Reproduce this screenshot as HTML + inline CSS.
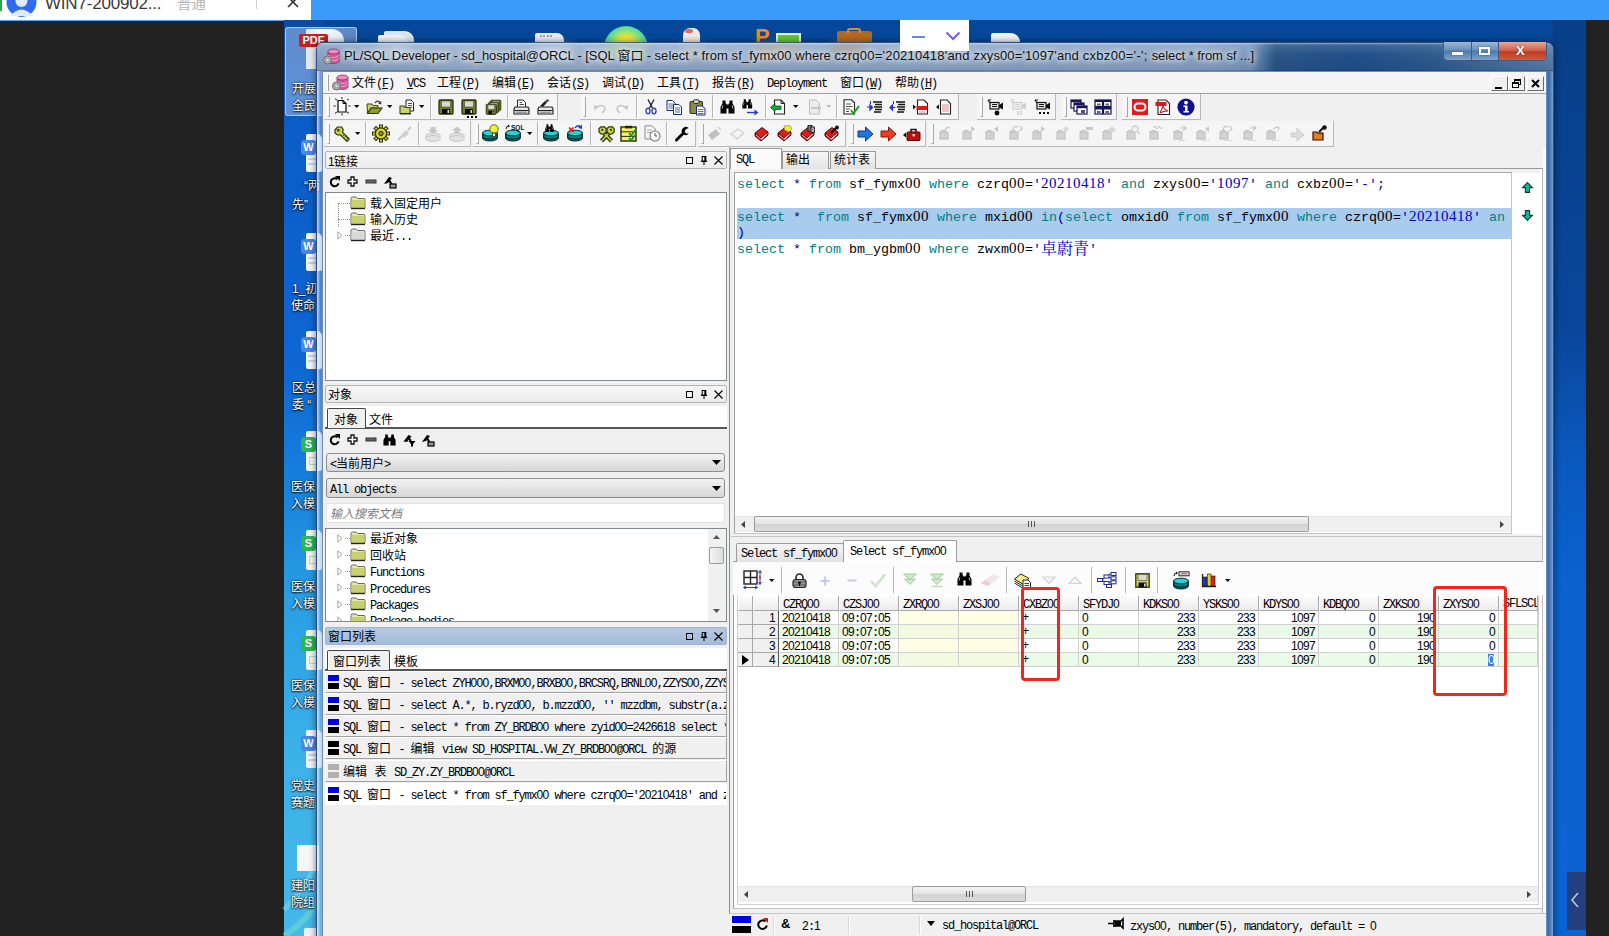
<!DOCTYPE html>
<html lang="zh"><head><meta charset="utf-8"><title>PL/SQL Developer</title>
<style>
html,body{margin:0;padding:0;background:#222;overflow:hidden}
body{width:1609px;height:936px;position:relative;font:12px "Liberation Mono","Noto Serif CJK SC",monospace;color:#000}
div{position:absolute;box-sizing:border-box;white-space:nowrap}
svg{position:absolute;overflow:visible}
u{text-decoration-skip-ink:none;text-underline-offset:1px}
i.c{font-style:normal;letter-spacing:0}
i.d{font-style:normal;letter-spacing:-.67px;font-family:"Liberation Sans",sans-serif}
.e i.d{font-family:"Liberation Serif",serif;font-size:15px;letter-spacing:.5px;line-height:14px}
.e i.c{position:relative;top:1px}
.u{font:12px/14px "Liberation Mono","Noto Sans CJK SC",monospace;letter-spacing:-1.2px;color:#000}
.e{font:13.33px/16px "Liberation Mono","Noto Serif CJK SC",monospace;color:#000}
.e i.c{font-size:16px;line-height:14px}
.k{color:#008080}.s{color:#0000c8}.n{color:#000080}
.wl i.c{margin-right:1.5px}
.t{font:12px/14px "Liberation Sans","Noto Sans CJK SC",sans-serif;color:#000}
</style></head>
<body>
<div style="left:0px;top:0px;width:1609px;height:20px;background:#3a9bfb"></div>
<div style="left:0px;top:0px;width:311px;height:21px;background:#fff;border-bottom:1.5px solid #4aa3fb"></div>
<svg style="left:6px;top:-15px" width="31" height="34" viewBox="0 0 31 34"><circle cx="15.5" cy="17" r="15" fill="#2f6bf0"/><circle cx="15.5" cy="16" r="6" fill="#dfe9ff"/><path d="M4 31 Q15.5 18 27 31 Z" fill="#dfe9ff"/></svg>
<div style="left:0px;top:0px;width:2px;height:11px;background:#2aa84a"></div>
<div style="left:45px;top:-7px;font:17px/22px 'Liberation Sans',sans-serif;color:#3a3a3a;letter-spacing:-0.2px">WIN7-200902...</div>
<div style="left:177px;top:-7px;font:14.5px/22px 'Liberation Sans','Noto Sans CJK SC',sans-serif;color:#b4b4b4">普通</div>
<div style="left:256px;top:0px;width:1px;height:9px;background:#ccc"></div>
<svg style="left:287px;top:-4px" width="12" height="12" viewBox="0 0 12 12"><path d="M1 1 L11 11 M11 1 L1 11" stroke="#333" stroke-width="1.6" fill="none"/></svg>
<div style="left:284px;top:20px;width:1302px;height:916px;background:#05489a"></div>
<div style="left:284px;top:20px;width:40px;height:916px;background:linear-gradient(180deg,#0a4ca4 0,#0b5cc6 100px,#0d66d2 340px,#1680dc 460px,#2a9ee4 580px,#3cb2e8 740px,#46b8ea 916px)"></div>
<svg style="left:284px;top:850px" width="34" height="86" viewBox="0 0 34 86"><path d="M0 60 Q20 40 34 10" stroke="#8fe0f0" stroke-width="5" fill="none" opacity=".45"/><path d="M0 86 Q24 70 34 50" stroke="#7fe8c8" stroke-width="6" fill="none" opacity=".4"/></svg>
<div style="left:1553px;top:20px;width:33px;height:916px;background:linear-gradient(180deg,#083f88 0%,#09469a 33%,#0a58bc 47%,#0b62d0 62%,#0b64d4 100%)"></div>
<div style="left:1566.5px;top:872px;width:19.5px;height:58px;background:#233f80"></div>
<svg style="left:1569px;top:890px" width="12" height="20" viewBox="0 0 12 20"><path d="M9 3 L3 10 L9 17" stroke="#b9c6e0" stroke-width="1.6" fill="none"/></svg>
<div style="left:285px;top:27px;width:72px;height:89px;background:rgba(150,182,232,.6);border:1px solid rgba(190,215,248,.8);border-radius:3px"></div>
<div style="left:306px;top:29px;width:38px;height:40px;background:linear-gradient(90deg,#dfe7f5,#f4f7fc 40%,#e8eef8);border-radius:1px 12px 0 0"></div>
<div style="left:299px;top:34px;width:29px;height:13px;background:#c81e1e;border-radius:2px;color:#fff;font:bold 11px/13px 'Liberation Sans',sans-serif;text-align:center">PDF</div>
<div style="left:292px;top:81px;font:12px/16px 'Liberation Sans','Noto Sans CJK SC',sans-serif;color:#fff;text-shadow:0 1px 2px #000,0 0 2px #000">开展</div>
<div style="left:292px;top:98px;font:12px/16px 'Liberation Sans','Noto Sans CJK SC',sans-serif;color:#fff;text-shadow:0 1px 2px #000,0 0 2px #000">全民</div>
<div style="left:304px;top:178px;font:12px/16px 'Liberation Sans','Noto Sans CJK SC',sans-serif;color:#fff;text-shadow:0 1px 2px #000,0 0 2px #000">“两</div>
<div style="left:292px;top:197px;font:12px/16px 'Liberation Sans','Noto Sans CJK SC',sans-serif;color:#fff;text-shadow:0 1px 2px #000,0 0 2px #000">先”</div>
<div style="left:292px;top:281px;font:12px/16px 'Liberation Sans','Noto Sans CJK SC',sans-serif;color:#fff;text-shadow:0 1px 2px #000,0 0 2px #000">1_初</div>
<div style="left:291px;top:298px;font:12px/16px 'Liberation Sans','Noto Sans CJK SC',sans-serif;color:#fff;text-shadow:0 1px 2px #000,0 0 2px #000">使命</div>
<div style="left:292px;top:380px;font:12px/16px 'Liberation Sans','Noto Sans CJK SC',sans-serif;color:#fff;text-shadow:0 1px 2px #000,0 0 2px #000">区总</div>
<div style="left:292px;top:397px;font:12px/16px 'Liberation Sans','Noto Sans CJK SC',sans-serif;color:#fff;text-shadow:0 1px 2px #000,0 0 2px #000">委 “</div>
<div style="left:291px;top:479px;font:12px/16px 'Liberation Sans','Noto Sans CJK SC',sans-serif;color:#fff;text-shadow:0 1px 2px #000,0 0 2px #000">医保</div>
<div style="left:291px;top:496px;font:12px/16px 'Liberation Sans','Noto Sans CJK SC',sans-serif;color:#fff;text-shadow:0 1px 2px #000,0 0 2px #000">入模</div>
<div style="left:291px;top:579px;font:12px/16px 'Liberation Sans','Noto Sans CJK SC',sans-serif;color:#fff;text-shadow:0 1px 2px #000,0 0 2px #000">医保</div>
<div style="left:291px;top:596px;font:12px/16px 'Liberation Sans','Noto Sans CJK SC',sans-serif;color:#fff;text-shadow:0 1px 2px #000,0 0 2px #000">入模</div>
<div style="left:291px;top:678px;font:12px/16px 'Liberation Sans','Noto Sans CJK SC',sans-serif;color:#fff;text-shadow:0 1px 2px #000,0 0 2px #000">医保</div>
<div style="left:291px;top:695px;font:12px/16px 'Liberation Sans','Noto Sans CJK SC',sans-serif;color:#fff;text-shadow:0 1px 2px #000,0 0 2px #000">入模</div>
<div style="left:291px;top:778px;font:12px/16px 'Liberation Sans','Noto Sans CJK SC',sans-serif;color:#fff;text-shadow:0 1px 2px #000,0 0 2px #000">党史</div>
<div style="left:291px;top:795px;font:12px/16px 'Liberation Sans','Noto Sans CJK SC',sans-serif;color:#fff;text-shadow:0 1px 2px #000,0 0 2px #000">赛题</div>
<div style="left:291px;top:878px;font:12px/16px 'Liberation Sans','Noto Sans CJK SC',sans-serif;color:#fff;text-shadow:0 1px 2px #000,0 0 2px #000">建阳</div>
<div style="left:291px;top:895px;font:12px/16px 'Liberation Sans','Noto Sans CJK SC',sans-serif;color:#fff;text-shadow:0 1px 2px #000,0 0 2px #000">院组</div>
<div style="left:306px;top:134px;width:16px;height:38px;background:#f3f6fc;border-radius:2px 5px 2px 2px"></div>
<div style="left:308px;top:158px;width:10px;height:2px;background:#c9d4ea"></div>
<div style="left:308px;top:163px;width:10px;height:2px;background:#c9d4ea"></div>
<div style="left:301px;top:140px;width:15px;height:15px;background:#4a86e8;border-radius:3px;color:#fff;font:bold 11px/14px 'Liberation Sans',sans-serif;text-align:center">W</div>
<div style="left:306px;top:233px;width:16px;height:38px;background:#f3f6fc;border-radius:2px 5px 2px 2px"></div>
<div style="left:308px;top:257px;width:10px;height:2px;background:#c9d4ea"></div>
<div style="left:308px;top:262px;width:10px;height:2px;background:#c9d4ea"></div>
<div style="left:301px;top:239px;width:15px;height:15px;background:#4a86e8;border-radius:3px;color:#fff;font:bold 11px/14px 'Liberation Sans',sans-serif;text-align:center">W</div>
<div style="left:306px;top:331px;width:16px;height:38px;background:#f3f6fc;border-radius:2px 5px 2px 2px"></div>
<div style="left:308px;top:355px;width:10px;height:2px;background:#c9d4ea"></div>
<div style="left:308px;top:360px;width:10px;height:2px;background:#c9d4ea"></div>
<div style="left:301px;top:337px;width:15px;height:15px;background:#4a86e8;border-radius:3px;color:#fff;font:bold 11px/14px 'Liberation Sans',sans-serif;text-align:center">W</div>
<div style="left:306px;top:730px;width:16px;height:38px;background:#f3f6fc;border-radius:2px 5px 2px 2px"></div>
<div style="left:308px;top:754px;width:10px;height:2px;background:#c9d4ea"></div>
<div style="left:308px;top:759px;width:10px;height:2px;background:#c9d4ea"></div>
<div style="left:301px;top:736px;width:15px;height:15px;background:#4a86e8;border-radius:3px;color:#fff;font:bold 11px/14px 'Liberation Sans',sans-serif;text-align:center">W</div>
<div style="left:306px;top:431px;width:16px;height:40px;background:#f4f8f4;border-radius:2px 5px 2px 2px"></div>
<div style="left:309px;top:457px;width:9px;height:8px;border:1px solid #b9d8c2"></div>
<div style="left:301px;top:437px;width:15px;height:15px;background:#2fb45a;border-radius:3px;color:#fff;font:bold 11px/14px 'Liberation Sans',sans-serif;text-align:center">S</div>
<div style="left:306px;top:530px;width:16px;height:40px;background:#f4f8f4;border-radius:2px 5px 2px 2px"></div>
<div style="left:309px;top:556px;width:9px;height:8px;border:1px solid #b9d8c2"></div>
<div style="left:301px;top:536px;width:15px;height:15px;background:#2fb45a;border-radius:3px;color:#fff;font:bold 11px/14px 'Liberation Sans',sans-serif;text-align:center">S</div>
<div style="left:306px;top:630px;width:16px;height:40px;background:#f4f8f4;border-radius:2px 5px 2px 2px"></div>
<div style="left:309px;top:656px;width:9px;height:8px;border:1px solid #b9d8c2"></div>
<div style="left:301px;top:636px;width:15px;height:15px;background:#2fb45a;border-radius:3px;color:#fff;font:bold 11px/14px 'Liberation Sans',sans-serif;text-align:center">S</div>
<div style="left:297px;top:845px;width:22px;height:26px;background:#f6f6f6"></div>
<div style="left:304px;top:928px;width:14px;height:8px;background:#eef2f8;border-radius:2px 2px 0 0"></div>
<div style="left:384px;top:31px;width:30px;height:16px;background:#dfe5f0;border-radius:2px 9px 0 0"></div>
<div style="left:378px;top:35px;width:30px;height:12px;background:#f2f5fa;border-radius:2px 9px 0 0"></div>
<div style="left:535px;top:33px;width:29px;height:14px;background:#eceef4;border-radius:2px 7px 0 0"></div>
<div style="left:540px;top:35px;width:12px;height:2px;border-top:2px dotted #9aa3b5"></div>
<div style="left:604px;top:26px;width:44px;height:44px;border-radius:50%;background:radial-gradient(circle at 50% 45%,#f8f23c 0%,#eee63a 28%,#6fe08a 52%,#2fd0c0 72%,#21bfe0 100%);clip-path:inset(0 0 26px 0)"></div>
<div style="left:683px;top:28px;width:17px;height:18px;background:#f1ece6;border-radius:7px 7px 0 0"></div>
<div style="left:685px;top:29px;width:8px;height:4px;background:#e06a6a;border-radius:2px"></div>
<div style="left:755px;top:26px;font:bold 22px/22px 'Liberation Sans',sans-serif;color:#f08a1c">P</div>
<div style="left:776px;top:33px;width:25px;height:12px;background:#5ccf2f;border:2px solid #e8f2e0;border-bottom:none"></div>
<div style="left:837px;top:31px;width:35px;height:14px;background:#b56a22;border-radius:3px 3px 0 0"></div>
<div style="left:847px;top:28px;width:14px;height:5px;border:2px solid #d8912f;border-bottom:none;border-radius:3px 3px 0 0"></div>
<div style="left:991px;top:33px;width:29px;height:12px;background:#f2f4f8;border-radius:2px 9px 0 0"></div>
<div style="left:316px;top:42px;width:1238px;height:900px;border-radius:7px 7px 0 0;background:linear-gradient(90deg,rgba(225,238,252,.8) 0,rgba(200,222,248,.6) 2px,rgba(150,180,225,.42) 3px,rgba(140,170,215,.4) 1231px,rgba(150,180,225,.45) 1233px,rgba(200,222,248,.6) 1236px);border:1px solid #2f4d7c;box-shadow:0 0 7px rgba(0,0,0,.55)"></div>
<div style="left:317px;top:43px;width:1236px;height:28px;border-radius:6px 6px 0 0;background:linear-gradient(90deg,#8aa3c4 0,#9cb2ce 12%,#93abca 40%,#8aa4c5 72%,#7a98be 75.5%,#2a5686 77.5%,#20508a 84%,#2c5a8c 90%,#5b7fa9 100%)"></div>
<div style="left:317px;top:43px;width:1236px;height:28px;border-radius:6px 6px 0 0;background:linear-gradient(180deg,rgba(255,255,255,.5) 0,rgba(255,255,255,.12) 2px,rgba(255,255,255,0) 12px,rgba(10,30,60,.12) 27px,rgba(20,40,80,.55) 28px)"></div>
<div style="left:378px;top:44px;width:34px;height:14px;background:#e8edf5;opacity:.35;filter:blur(4px)"></div>
<div style="left:536px;top:44px;width:36px;height:14px;background:#dde3ee;opacity:.35;filter:blur(4px)"></div>
<div style="left:606px;top:44px;width:40px;height:14px;background:#c9e88a;opacity:.35;filter:blur(4px)"></div>
<div style="left:682px;top:44px;width:20px;height:14px;background:#e8d8c4;opacity:.35;filter:blur(4px)"></div>
<div style="left:756px;top:44px;width:44px;height:14px;background:#d8b070;opacity:.35;filter:blur(4px)"></div>
<div style="left:832px;top:44px;width:32px;height:14px;background:#c08850;opacity:.35;filter:blur(4px)"></div>
<div id="ttl" class="t" style="left:344px;top:49px;font-size:13px;white-space:pre;color:#111;text-shadow:0 0 6px #fff,0 0 6px #fff"><span style="letter-spacing:-0.113px">PL/SQL Developer - sd_hospital@ORCL - [SQL 窗口 - </span><span style="letter-spacing:0.087px">select * from sf_fymx00 </span><span style="letter-spacing:0.011px">where </span><span style="letter-spacing:0.213px">czrq00='20210418'and </span><span style="letter-spacing:0.109px">zxys00='1097'and </span><span style="letter-spacing:0.307px">cxbz00='-'; </span><span style="letter-spacing:-0.082px">select * from sf ...]</span></div>
<svg style="left:323px;top:48px" width="17" height="17" viewBox="0 0 17 17"><path d="M5 3.5 L5 13 A5.5 2.5 0 0 0 16 13 L16 3.5" fill="#d05a9a" stroke="#8a2a5a" stroke-width=".8"/><path d="M5 7 A5.5 2.5 0 0 0 16 7 M5 10 A5.5 2.5 0 0 0 16 10" fill="none" stroke="#f0b0d0" stroke-width=".9"/><ellipse cx="10.5" cy="3.5" rx="5.5" ry="2.5" fill="#f08ac0" stroke="#8a2a5a" stroke-width=".8"/><circle cx="4.5" cy="12" r="4" fill="#b4b4b4" stroke="#6a6a6a" stroke-width="1"/><circle cx="4.5" cy="12" r="1.6" fill="#e8e8e8" stroke="#777" stroke-width=".6"/></svg>
<div style="left:1443px;top:42px;width:104px;height:19px;border:1px solid #3e5a85;border-top:none;border-radius:0 0 5px 5px;background:linear-gradient(180deg,#9cb6d6,#6a8fbd 45%,#4c78ad 50%,#7da1cc);overflow:hidden"><div style="left:55px;top:0;width:49px;height:19px;background:linear-gradient(180deg,#e8a99b,#d0604a 45%,#c03a20 52%,#d4603c)"></div><div style="left:27px;top:0;width:1px;height:19px;background:#3e5a85"></div><div style="left:54px;top:0;width:1px;height:19px;background:#3e5a85"></div><div style="left:8px;top:10px;width:11px;height:3px;background:#fff;box-shadow:0 0 1px #234"></div><div style="left:35px;top:5px;width:11px;height:8px;border:2px solid #fff;box-shadow:0 0 1px #234"></div><div style="left:72px;top:1px;font:bold 13px/16px 'Liberation Sans',sans-serif;color:#fff;text-shadow:0 0 2px #622">X</div></div>
<div style="left:322px;top:71px;width:1225px;height:870px;background:#f0f0f0;border:1px solid #6f8bb0"></div>
<div style="left:323px;top:72px;width:1223px;height:22px;background:#f4f4f4;border-bottom:1px solid #a0a0a0"></div>
<div style="left:327px;top:75px;width:2px;height:16px;border-left:1px solid #fff;border-right:1px solid #a0a0a0"></div>
<div class="u" style="left:352px;top:77px"><i class="c">文件</i>(<u>F</u>)</div>
<div class="u" style="left:407px;top:77px"><u>V</u>CS</div>
<div class="u" style="left:437px;top:77px"><i class="c">工程</i>(<u>P</u>)</div>
<div class="u" style="left:492px;top:77px"><i class="c">编辑</i>(<u>E</u>)</div>
<div class="u" style="left:547px;top:77px"><i class="c">会话</i>(<u>S</u>)</div>
<div class="u" style="left:602px;top:77px"><i class="c">调试</i>(<u>D</u>)</div>
<div class="u" style="left:657px;top:77px"><i class="c">工具</i>(<u>T</u>)</div>
<div class="u" style="left:712px;top:77px"><i class="c">报告</i>(<u>R</u>)</div>
<div class="u" style="left:767px;top:77px">Deployment</div>
<div class="u" style="left:840px;top:77px"><i class="c">窗口</i>(<u>W</u>)</div>
<div class="u" style="left:895px;top:77px"><i class="c">帮助</i>(<u>H</u>)</div>
<svg style="left:332px;top:74px" width="17" height="17" viewBox="0 0 17 17"><path d="M5 3.5 L5 13 A5.5 2.5 0 0 0 16 13 L16 3.5" fill="#d05a9a" stroke="#8a2a5a" stroke-width=".8"/><path d="M5 7 A5.5 2.5 0 0 0 16 7 M5 10 A5.5 2.5 0 0 0 16 10" fill="none" stroke="#f0b0d0" stroke-width=".9"/><ellipse cx="10.5" cy="3.5" rx="5.5" ry="2.5" fill="#f08ac0" stroke="#8a2a5a" stroke-width=".8"/><circle cx="4.5" cy="12" r="4" fill="#b4b4b4" stroke="#6a6a6a" stroke-width="1"/><circle cx="4.5" cy="12" r="1.6" fill="#e8e8e8" stroke="#777" stroke-width=".6"/></svg>
<div style="left:1491px;top:76px;width:17px;height:15px;background:#f0f0f0;border:1px solid;border-color:#fff #696969 #696969 #fff"></div>
<div style="left:1508px;top:76px;width:17px;height:15px;background:#f0f0f0;border:1px solid;border-color:#fff #696969 #696969 #fff"></div>
<div style="left:1527px;top:76px;width:17px;height:15px;background:#f0f0f0;border:1px solid;border-color:#fff #696969 #696969 #fff"></div>
<div style="left:1495px;top:87px;width:7px;height:2px;background:#000"></div>
<div style="left:1514px;top:79px;width:7px;height:6px;border:1px solid #000;border-top-width:2px"></div>
<div style="left:1512px;top:82px;width:7px;height:6px;border:1px solid #000;border-top-width:2px;background:#f0f0f0"></div>
<svg style="left:1531px;top:79px" width="9" height="9" viewBox="0 0 9 9"><path d="M1 1 L8 8 M8 1 L1 8" stroke="#000" stroke-width="2" fill="none"/></svg>
<div style="left:323px;top:94px;width:1223px;height:27px;background:#f0f0f0"></div>
<div style="left:323px;top:121px;width:1223px;height:27px;background:#f0f0f0"></div>
<div style="left:324px;top:94px;width:234px;height:26px;background:#f5f5f5;border-right:1px solid #b8b8b8;border-bottom:1px solid #b8b8b8"></div>
<div style="left:327px;top:97px;width:3px;height:20px;border-left:1px solid #fff;border-right:1px solid #a8a8a8;border-bottom:1px solid #a8a8a8"></div>
<div style="left:580px;top:94px;width:379px;height:26px;background:#f5f5f5;border-right:1px solid #b8b8b8;border-bottom:1px solid #b8b8b8"></div>
<div style="left:583px;top:97px;width:3px;height:20px;border-left:1px solid #fff;border-right:1px solid #a8a8a8;border-bottom:1px solid #a8a8a8"></div>
<div style="left:977px;top:94px;width:79px;height:26px;background:#f5f5f5;border-right:1px solid #b8b8b8;border-bottom:1px solid #b8b8b8"></div>
<div style="left:980px;top:97px;width:3px;height:20px;border-left:1px solid #fff;border-right:1px solid #a8a8a8;border-bottom:1px solid #a8a8a8"></div>
<div style="left:1061px;top:94px;width:56px;height:26px;background:#f5f5f5;border-right:1px solid #b8b8b8;border-bottom:1px solid #b8b8b8"></div>
<div style="left:1064px;top:97px;width:3px;height:20px;border-left:1px solid #fff;border-right:1px solid #a8a8a8;border-bottom:1px solid #a8a8a8"></div>
<div style="left:1122px;top:94px;width:79px;height:26px;background:#f5f5f5;border-right:1px solid #b8b8b8;border-bottom:1px solid #b8b8b8"></div>
<div style="left:1125px;top:97px;width:3px;height:20px;border-left:1px solid #fff;border-right:1px solid #a8a8a8;border-bottom:1px solid #a8a8a8"></div>
<svg style="left:333px;top:97px" width="18" height="19" viewBox="0 0 18 19"><path d="M5 3.5 L10 3.5 L13 6.5 L13 15 L5 15 Z" fill="#fff" stroke="#000" stroke-width="1.2"/><path d="M10 3.5 L10 6.5 L13 6.5" fill="none" stroke="#000" stroke-width="1"/><path d="M9 0 L9 2.2 M2.2 1.6 L3.8 3.2 M15.6 1.8 L14.2 3.2 M0.4 9 L2.8 9 M15.2 9 L17.6 9 M2.2 16.4 L3.8 14.8 M15.8 16.4 L14.2 14.8 M9 16.2 L9 18.4" stroke="#333" stroke-width="1.1"/></svg>
<svg style="left:354px;top:105px" width="6" height="3" viewBox="0 0 6 3"><path d="M0 0 L5.4 0 L2.7 3 Z" fill="#000"/></svg>
<svg style="left:366px;top:99px" width="17" height="16" viewBox="0 0 17 16"><path d="M1 5 L6 5 L7 6.5 L12 6.5 L12 9 L5 9 L1.5 14 Z" fill="#c9d46a" stroke="#3d4710" stroke-width="1"/><path d="M1.5 14.5 L5 9 L16 9 L12 14.5 Z" fill="#8a9a2c" stroke="#2e360c" stroke-width="1.1"/><path d="M9 4 Q11.5 0.5 14 3.5" fill="none" stroke="#333" stroke-width="1.2"/><path d="M15.5 2 L15 5.5 L12 4.5 Z" fill="#333"/></svg>
<svg style="left:387px;top:105px" width="6" height="3" viewBox="0 0 6 3"><path d="M0 0 L5.4 0 L2.7 3 Z" fill="#000"/></svg>
<svg style="left:399px;top:99px" width="16" height="16" viewBox="0 0 16 16"><path d="M7 1 L12 1 L14.5 3.5 L14.5 12 L7 12 Z" fill="#fff" stroke="#222" stroke-width="1"/><path d="M9 4.5 L13 4.5 M9 6.5 L13 6.5 M9 8.5 L13 8.5" stroke="#4a4ab0" stroke-width="1"/><path d="M1 7 L5 7 L6 8.5 L11 8.5 L11 14.5 L1 14.5 Z" fill="#c9d46a" stroke="#3d4710" stroke-width="1.1"/><path d="M1 14.8 L12 14.8" stroke="#222" stroke-width="1.3"/></svg>
<svg style="left:419px;top:105px" width="6" height="3" viewBox="0 0 6 3"><path d="M0 0 L5.4 0 L2.7 3 Z" fill="#000"/></svg>
<div style="left:430px;top:95px;width:2px;height:23px;border-left:1px solid #b4b4b4;border-right:1px solid #fff"></div>
<svg style="left:438px;top:99px" width="16" height="16" viewBox="0 0 16 16"><g transform="translate(0 0) scale(1.0)"><rect x="1" y="1" width="14" height="14" rx="1" fill="#707a30" stroke="#2c3408" stroke-width="1.3"/><rect x="3.5" y="2" width="9" height="6" fill="#d9d9cc" stroke="#4a4a3a" stroke-width=".6"/><rect x="4" y="10" width="8" height="5" fill="#0a0a0a"/><rect x="9.5" y="11" width="1.6" height="3" fill="#ddd"/></g></svg>
<svg style="left:461px;top:99px" width="17" height="19" viewBox="0 0 17 19"><g transform="translate(0 0) scale(1.0)"><rect x="1" y="1" width="14" height="14" rx="1" fill="#707a30" stroke="#2c3408" stroke-width="1.3"/><rect x="3.5" y="2" width="9" height="6" fill="#d9d9cc" stroke="#4a4a3a" stroke-width=".6"/><rect x="4" y="10" width="8" height="5" fill="#0a0a0a"/><rect x="9.5" y="11" width="1.6" height="3" fill="#ddd"/></g><rect x="6" y="17" width="2" height="2" fill="#000"/><rect x="10" y="17" width="2" height="2" fill="#000"/><rect x="14" y="17" width="2" height="2" fill="#000"/></svg>
<svg style="left:485px;top:99px" width="17" height="17" viewBox="0 0 17 17"><g transform="translate(5 0.5) scale(0.72)"><rect x="1" y="1" width="14" height="14" rx="1" fill="#707a30" stroke="#2c3408" stroke-width="1.3"/><rect x="3.5" y="2" width="9" height="6" fill="#d9d9cc" stroke="#4a4a3a" stroke-width=".6"/><rect x="4" y="10" width="8" height="5" fill="#0a0a0a"/><rect x="9.5" y="11" width="1.6" height="3" fill="#ddd"/></g><g transform="translate(3 2.5) scale(0.72)"><rect x="1" y="1" width="14" height="14" rx="1" fill="#707a30" stroke="#2c3408" stroke-width="1.3"/><rect x="3.5" y="2" width="9" height="6" fill="#d9d9cc" stroke="#4a4a3a" stroke-width=".6"/><rect x="4" y="10" width="8" height="5" fill="#0a0a0a"/><rect x="9.5" y="11" width="1.6" height="3" fill="#ddd"/></g><g transform="translate(0.5 4.5) scale(0.72)"><rect x="1" y="1" width="14" height="14" rx="1" fill="#707a30" stroke="#2c3408" stroke-width="1.3"/><rect x="3.5" y="2" width="9" height="6" fill="#d9d9cc" stroke="#4a4a3a" stroke-width=".6"/><rect x="4" y="10" width="8" height="5" fill="#0a0a0a"/><rect x="9.5" y="11" width="1.6" height="3" fill="#ddd"/></g></svg>
<div style="left:507px;top:95px;width:2px;height:23px;border-left:1px solid #b4b4b4;border-right:1px solid #fff"></div>
<svg style="left:513px;top:99px" width="17" height="16" viewBox="0 0 17 16"><path d="M4.5 8 L4.5 1 L10 1 L12.5 3.5 L12.5 8" fill="#fff" stroke="#222" stroke-width="1"/><path d="M6.5 3.5 L9 3.5 M6.5 5.5 L11 5.5" stroke="#444" stroke-width="1"/><path d="M2 8 L15 8 L16 10 L16 15 L1 15 L1 10 Z" fill="#e4e4e4" stroke="#222" stroke-width="1.1"/><path d="M1 11.5 L16 11.5" stroke="#222" stroke-width="1"/><rect x="3" y="12.5" width="11" height="1.6" fill="#9a9a9a"/></svg>
<svg style="left:537px;top:99px" width="17" height="16" viewBox="0 0 17 16"><path d="M3 7 L8 2 L10 3.5 L6 8 Z" fill="#222"/><path d="M8 2 L10.5 0 L12.5 1.5 L10 3.5 Z" fill="#555"/><path d="M2 8 L15 8 L16 10 L16 15 L1 15 L1 10 Z" fill="#e4e4e4" stroke="#222" stroke-width="1.1"/><path d="M1 11.5 L16 11.5" stroke="#222" stroke-width="1"/><rect x="3" y="12.5" width="11" height="1.6" fill="#9a9a9a"/></svg>
<svg style="left:593px;top:101px" width="13" height="14" viewBox="0 0 13 14"><g ><path d="M3 7 Q8 2.5 11.5 6 Q13 9 9 12" fill="none" stroke="#c6c6c6" stroke-width="1.5"/><path d="M0.5 4.5 L5.5 5 L2 9.5 Z" fill="#c6c6c6"/></g></svg>
<svg style="left:616px;top:101px" width="13" height="14" viewBox="0 0 13 14"><g transform="translate(13 0) scale(-1 1)"><path d="M3 7 Q8 2.5 11.5 6 Q13 9 9 12" fill="none" stroke="#c6c6c6" stroke-width="1.5"/><path d="M0.5 4.5 L5.5 5 L2 9.5 Z" fill="#c6c6c6"/></g></svg>
<div style="left:636px;top:95px;width:2px;height:23px;border-left:1px solid #b4b4b4;border-right:1px solid #fff"></div>
<svg style="left:645px;top:99px" width="12" height="16" viewBox="0 0 12 16"><path d="M3 0.5 L7.5 9 M9 0.5 L4.5 9" stroke="#1a1a3a" stroke-width="1.3" fill="none"/><ellipse cx="3" cy="12" rx="2" ry="2.8" fill="none" stroke="#4040c0" stroke-width="1.4"/><ellipse cx="9" cy="12" rx="2" ry="2.8" fill="none" stroke="#4040c0" stroke-width="1.4"/></svg>
<svg style="left:666px;top:99px" width="17" height="17" viewBox="0 0 17 17"><g transform="translate(0.5 1)"><path d="M0.5 0.5 L6 0.5 L8.5 3 L8.5 10.5 L0.5 10.5 Z" fill="#fff" stroke="#1c2a6e" stroke-width="1"/><path d="M2 4 L7 4 M2 6 L7 6 M2 8 L7 8" stroke="#5668c0" stroke-width="1"/></g><g transform="translate(7 5)"><path d="M0.5 0.5 L6 0.5 L8.5 3 L8.5 10.5 L0.5 10.5 Z" fill="#fff" stroke="#1c2a6e" stroke-width="1"/><path d="M2 4 L7 4 M2 6 L7 6 M2 8 L7 8" stroke="#5668c0" stroke-width="1"/></g></svg>
<svg style="left:689px;top:99px" width="17" height="17" viewBox="0 0 17 17"><rect x="1" y="2.5" width="12.5" height="12" rx="1" fill="#8a8a4a" stroke="#33330f" stroke-width="1.1"/><rect x="4.5" y="0.8" width="5.5" height="3.6" rx="1" fill="#ddd" stroke="#222" stroke-width="1"/><path d="M7.5 7 L13 7 L16 9.5 L16 16 L7.5 16 Z" fill="#fff" stroke="#1c2a6e" stroke-width="1"/><path d="M9 10.5 L14.5 10.5 M9 12.5 L14.5 12.5 M9 14.5 L14.5 14.5" stroke="#5668c0" stroke-width="1"/></svg>
<div style="left:712px;top:95px;width:2px;height:23px;border-left:1px solid #b4b4b4;border-right:1px solid #fff"></div>
<svg style="left:720px;top:100px" width="16" height="15" viewBox="0 0 16 15"><g transform="scale(1.0)"><path d="M2.5 0.5 H5.5 V3 L6.5 4 V13.5 H0.5 V7 L2.5 3.5 Z" fill="#000"/><path d="M12.5 0.5 H9.5 V3 L8.5 4 V13.5 H14.5 V7 L12.5 3.5 Z" fill="#000"/><rect x="6" y="4.5" width="3" height="4" fill="#000"/><path d="M2 8.5 L2.9 5.5 M13 8.5 L12.1 5.5" stroke="#fff" stroke-width=".8"/></g></svg>
<svg style="left:742px;top:99px" width="17" height="17" viewBox="0 0 17 17"><g transform="scale(.7)"><path d="M2.5 0.5 H5.5 V3 L6.5 4 V13.5 H0.5 V7 L2.5 3.5 Z" fill="#000"/><path d="M12.5 0.5 H9.5 V3 L8.5 4 V13.5 H14.5 V7 L12.5 3.5 Z" fill="#000"/><rect x="6" y="4.5" width="3" height="4" fill="#000"/><path d="M2 8.5 L2.9 5.5 M13 8.5 L12.1 5.5" stroke="#fff" stroke-width=".8"/></g><path d="M5 13.5 L13 13.5" stroke="#2a3ad0" stroke-width="1.4"/><path d="M12.5 10.5 L16.5 13.5 L12.5 16.5 Z" fill="#2a3ad0"/></svg>
<div style="left:765px;top:95px;width:2px;height:23px;border-left:1px solid #b4b4b4;border-right:1px solid #fff"></div>
<svg style="left:770px;top:99px" width="16" height="16" viewBox="0 0 16 16"><path d="M4.5 1 L11 1 L14.5 4.5 L14.5 15 L4.5 15 Z" fill="#fff" stroke="#222" stroke-width="1.1"/><path d="M11 1 L11 4.5 L14.5 4.5" fill="none" stroke="#222" stroke-width="1"/><path d="M0.5 8.5 L5 4.5 L5 7 L11 7 L11 10.5 L5 10.5 L5 12.5 Z" fill="#1ea33c" stroke="#0a5a1a" stroke-width=".8"/></svg>
<svg style="left:793px;top:105px" width="6" height="3" viewBox="0 0 6 3"><path d="M0 0 L5.4 0 L2.7 3 Z" fill="#000"/></svg>
<svg style="left:806px;top:99px" width="16" height="16" viewBox="0 0 16 16"><path d="M3.5 1 L10 1 L13.5 4.5 L13.5 15 L3.5 15 Z" fill="#ececec" stroke="#bdbdbd" stroke-width="1"/><path d="M5 8 L12 8 L12 6 L15.5 9 L12 12 L12 10 L5 10 Z" fill="#c8c8c8"/></svg>
<svg style="left:826px;top:105px" width="6" height="3" viewBox="0 0 6 3"><path d="M0 0 L5.4 0 L2.7 3 Z" fill="#c0c0c0"/></svg>
<div style="left:836px;top:95px;width:2px;height:23px;border-left:1px solid #b4b4b4;border-right:1px solid #fff"></div>
<svg style="left:843px;top:99px" width="17" height="16" viewBox="0 0 17 16"><path d="M1 0.8 L8.5 0.8 L11.5 3.8 L11.5 15 L1 15 Z" fill="#fff" stroke="#222" stroke-width="1.1"/><path d="M3 5 L8 5 M3 7.5 L9.5 7.5 M3 10 L7 10 M3 12.5 L6 12.5" stroke="#555" stroke-width="1"/><path d="M8 11 L10.5 14.5 L16 7" fill="none" stroke="#1aa02a" stroke-width="2"/></svg>
<svg style="left:867px;top:100px" width="16" height="14" viewBox="0 0 16 14"><path d="M0 7 L3 7 M3 5 L5.5 7.5 L3 10 Z" stroke="#2233bb" fill="#2233bb" stroke-width="1.2"/><path d="M6 2 L15 2 M8 4.5 L15 4.5 M7 7 L15 7 M8 9.5 L15 9.5 M7 12 L14 12" stroke="#111" stroke-width="1.5"/><path d="M3.5 1 L3.5 4" stroke="#2233bb" stroke-width="1"/></svg>
<svg style="left:890px;top:100px" width="16" height="14" viewBox="0 0 16 14"><path d="M2.5 7.5 L5.5 7.5 M2.5 5 L0 7.5 L2.5 10 Z" stroke="#2233bb" fill="#2233bb" stroke-width="1.2"/><path d="M6 2 L15 2 M8 4.5 L15 4.5 M7 7 L15 7 M8 9.5 L15 9.5 M7 12 L14 12" stroke="#111" stroke-width="1.5"/><path d="M3.5 1 L3.5 4" stroke="#2233bb" stroke-width="1"/></svg>
<svg style="left:913px;top:99px" width="16" height="16" viewBox="0 0 16 16"><path d="M0 5.5 L3 8 L0 10.5 Z" fill="#111"/><path d="M4.5 1 L11 1 L14.5 4.5 L14.5 15 L4.5 15 Z" fill="#fff" stroke="#222" stroke-width="1.1"/><rect x="3.5" y="7" width="11" height="4" fill="#e01818"/><path d="M6 13 L13 13" stroke="#e08a8a" stroke-width="1"/></svg>
<svg style="left:936px;top:99px" width="16" height="16" viewBox="0 0 16 16"><path d="M0 8 L3 5.5 L3 10.5 Z" fill="#111"/><path d="M4.5 1 L11 1 L14.5 4.5 L14.5 15 L4.5 15 Z" fill="#fff" stroke="#222" stroke-width="1.1"/><path d="M6 6 L13 6 M6 8 L13 8 M6 10 L13 10 M6 12 L13 12" stroke="#e08a8a" stroke-width="1"/></svg>
<svg style="left:987px;top:99px" width="17" height="17" viewBox="0 0 17 17"><path d="M1 1 L4 1 M1 1 L3 4" stroke="#111" stroke-width="1.2"/><rect x="3" y="3.5" width="9" height="6.5" fill="#e8e8e8" stroke="#111" stroke-width="1.2"/><path d="M12 6 L16 3.5 L16 10.5 L12 8.5 Z" fill="#111"/><path d="M5 5.5 L10 5.5 M5 7.5 L10 7.5" stroke="#111" stroke-width="1"/><circle cx="10" cy="14" r="2.4" fill="#000"/></svg>
<svg style="left:1010px;top:99px" width="17" height="17" viewBox="0 0 17 17"><path d="M1 1 L4 1 M1 1 L3 4" stroke="#cdcdcd" stroke-width="1.2"/><rect x="3" y="3.5" width="9" height="6.5" fill="#f2f2f2" stroke="#cdcdcd" stroke-width="1.2"/><path d="M12 6 L16 3.5 L16 10.5 L12 8.5 Z" fill="#cdcdcd"/><path d="M5 5.5 L10 5.5 M5 7.5 L10 7.5" stroke="#cdcdcd" stroke-width="1"/><path d="M8 12 L8 16 M11 12 L11 16" stroke="#cdcdcd" stroke-width="1.4"/></svg>
<svg style="left:1034px;top:99px" width="17" height="17" viewBox="0 0 17 17"><path d="M1 1 L4 1 M1 1 L3 4" stroke="#111" stroke-width="1.2"/><rect x="3" y="3.5" width="9" height="6.5" fill="#e8e8e8" stroke="#111" stroke-width="1.2"/><path d="M12 6 L16 3.5 L16 10.5 L12 8.5 Z" fill="#111"/><path d="M5 5.5 L10 5.5 M5 7.5 L10 7.5" stroke="#111" stroke-width="1"/><rect x="5" y="13" width="2" height="2" fill="#000"/><rect x="9" y="13" width="2" height="2" fill="#000"/><rect x="13" y="13" width="2" height="2" fill="#000"/></svg>
<svg style="left:1070px;top:99px" width="18" height="16" viewBox="0 0 18 16"><rect x="1" y="1" width="10" height="8" fill="#fff" stroke="#14145a" stroke-width="1.2"/><rect x="1" y="1" width="10" height="2.2" fill="#14145a"/><rect x="4" y="4" width="10" height="8" fill="#fff" stroke="#14145a" stroke-width="1.2"/><rect x="4" y="4" width="10" height="2.2" fill="#14145a"/><rect x="7" y="7" width="10" height="8" fill="#fff" stroke="#14145a" stroke-width="1.2"/><rect x="7" y="7" width="10" height="2.2" fill="#14145a"/><rect x="11" y="11" width="4" height="3" fill="#555"/></svg>
<svg style="left:1094px;top:99px" width="18" height="16" viewBox="0 0 18 16"><rect x="1" y="1" width="7.5" height="6.5" fill="#fff" stroke="#14145a" stroke-width="1.2"/><rect x="1" y="1" width="7.5" height="2" fill="#14145a"/><rect x="3" y="4.5" width="3.5" height="2" fill="#666"/><rect x="9.5" y="1" width="7.5" height="6.5" fill="#fff" stroke="#14145a" stroke-width="1.2"/><rect x="9.5" y="1" width="7.5" height="2" fill="#14145a"/><rect x="11.5" y="4.5" width="3.5" height="2" fill="#666"/><rect x="1" y="8.5" width="7.5" height="6.5" fill="#fff" stroke="#14145a" stroke-width="1.2"/><rect x="1" y="8.5" width="7.5" height="2" fill="#14145a"/><rect x="3" y="12.0" width="3.5" height="2" fill="#666"/><rect x="9.5" y="8.5" width="7.5" height="6.5" fill="#fff" stroke="#14145a" stroke-width="1.2"/><rect x="9.5" y="8.5" width="7.5" height="2" fill="#14145a"/><rect x="11.5" y="12.0" width="3.5" height="2" fill="#666"/></svg>
<svg style="left:1132px;top:99px" width="16" height="16" viewBox="0 0 16 16"><rect x="0" y="0" width="16" height="16" fill="#e8181c"/><rect x="2.5" y="4.5" width="11" height="7" rx="3.5" fill="none" stroke="#fff" stroke-width="2"/></svg>
<svg style="left:1155px;top:99px" width="16" height="17" viewBox="0 0 16 17"><path d="M3 1 L11 1 L14.5 4.5 L14.5 15.5 L3 15.5 Z" fill="#fff" stroke="#222" stroke-width="1.1"/><rect x="0.5" y="3" width="11" height="4" fill="#d81818"/><path d="M5 14 Q8 8 8 6 Q8 10 13 12 Q8 12 5 14" fill="none" stroke="#d81818" stroke-width="1.1"/></svg>
<svg style="left:1177px;top:98px" width="18" height="18" viewBox="0 0 18 18"><circle cx="9" cy="9" r="8.6" fill="#10108c"/><circle cx="9" cy="4.6" r="1.9" fill="#fff"/><path d="M6.5 7.5 L10.5 7.5 L10.5 13 L12 13 L12 14.5 L6.5 14.5 L6.5 13 L8 13 L8 9 L6.5 9 Z" fill="#fff"/></svg>
<div style="left:324px;top:121px;width:147px;height:26px;background:#f5f5f5;border-right:1px solid #b8b8b8;border-bottom:1px solid #b8b8b8"></div>
<div style="left:327px;top:124px;width:3px;height:20px;border-left:1px solid #fff;border-right:1px solid #a8a8a8;border-bottom:1px solid #a8a8a8"></div>
<div style="left:473px;top:121px;width:223px;height:26px;background:#f5f5f5;border-right:1px solid #b8b8b8;border-bottom:1px solid #b8b8b8"></div>
<div style="left:476px;top:124px;width:3px;height:20px;border-left:1px solid #fff;border-right:1px solid #a8a8a8;border-bottom:1px solid #a8a8a8"></div>
<div style="left:698px;top:121px;width:148px;height:26px;background:#f5f5f5;border-right:1px solid #b8b8b8;border-bottom:1px solid #b8b8b8"></div>
<div style="left:701px;top:124px;width:3px;height:20px;border-left:1px solid #fff;border-right:1px solid #a8a8a8;border-bottom:1px solid #a8a8a8"></div>
<div style="left:848px;top:121px;width:78px;height:26px;background:#f5f5f5;border-right:1px solid #b8b8b8;border-bottom:1px solid #b8b8b8"></div>
<div style="left:851px;top:124px;width:3px;height:20px;border-left:1px solid #fff;border-right:1px solid #a8a8a8;border-bottom:1px solid #a8a8a8"></div>
<div style="left:928px;top:121px;width:406px;height:26px;background:#f5f5f5;border-right:1px solid #b8b8b8;border-bottom:1px solid #b8b8b8"></div>
<div style="left:931px;top:124px;width:3px;height:20px;border-left:1px solid #fff;border-right:1px solid #a8a8a8;border-bottom:1px solid #a8a8a8"></div>
<svg style="left:334px;top:126px" width="16" height="16" viewBox="0 0 16 16"><path d="M1 4 L3.5 1 L7.5 1 L9.2 3.5 L8.6 6.4 L15.2 13 L13 15.4 L6.4 8.8 L3.5 9 L1 7 Z" fill="#cdd440" stroke="#2e3408" stroke-width="1.2"/><circle cx="4.3" cy="4.2" r="1.3" fill="#2e3408"/><path d="M9 9.6 L11 7.9 M10.8 11.4 L12.8 9.7 M12.6 13.2 L14.4 11.5" stroke="#2e3408" stroke-width="1"/></svg>
<svg style="left:355px;top:132px" width="6" height="3" viewBox="0 0 6 3"><path d="M0 0 L5.4 0 L2.7 3 Z" fill="#000"/></svg>
<div style="left:365px;top:122px;width:2px;height:23px;border-left:1px solid #b4b4b4;border-right:1px solid #fff"></div>
<svg style="left:372px;top:125px" width="18" height="17" viewBox="0 0 18 17"><rect x="7.5" y="0" width="3" height="4" fill="#d6d82e" stroke="#2e300a" stroke-width="1" transform="rotate(0 9 8.5)"/><rect x="7.5" y="0" width="3" height="4" fill="#d6d82e" stroke="#2e300a" stroke-width="1" transform="rotate(45 9 8.5)"/><rect x="7.5" y="0" width="3" height="4" fill="#d6d82e" stroke="#2e300a" stroke-width="1" transform="rotate(90 9 8.5)"/><rect x="7.5" y="0" width="3" height="4" fill="#d6d82e" stroke="#2e300a" stroke-width="1" transform="rotate(135 9 8.5)"/><rect x="7.5" y="0" width="3" height="4" fill="#d6d82e" stroke="#2e300a" stroke-width="1" transform="rotate(180 9 8.5)"/><rect x="7.5" y="0" width="3" height="4" fill="#d6d82e" stroke="#2e300a" stroke-width="1" transform="rotate(225 9 8.5)"/><rect x="7.5" y="0" width="3" height="4" fill="#d6d82e" stroke="#2e300a" stroke-width="1" transform="rotate(270 9 8.5)"/><rect x="7.5" y="0" width="3" height="4" fill="#d6d82e" stroke="#2e300a" stroke-width="1" transform="rotate(315 9 8.5)"/><circle cx="9" cy="8.5" r="5.6" fill="#d6d82e" stroke="#2e300a" stroke-width="1.2"/><circle cx="9" cy="8.5" r="2.2" fill="#8a8c1e" stroke="#2e300a" stroke-width="1"/></svg>
<svg style="left:397px;top:126px" width="15" height="15" viewBox="0 0 15 15"><path d="M1 14 L5 10 M11 4 L14 1" stroke="#c8c8c8" stroke-width="2"/><path d="M4 9 L9 4 L12 7 L7 12 Z" fill="#d0d0d0"/></svg>
<div style="left:418px;top:122px;width:2px;height:23px;border-left:1px solid #b4b4b4;border-right:1px solid #fff"></div>
<svg style="left:425px;top:126px" width="16" height="16" viewBox="0 0 16 16"><path d="M5.5 1 L10.5 1 L10.5 4 L13 4 L8 8 L3 4 L5.5 4 Z" fill="#c6c6c6"/><ellipse cx="8" cy="10" rx="7.5" ry="3" fill="#e2e2e2" stroke="#cacaca"/><ellipse cx="8" cy="12.5" rx="7.5" ry="3" fill="#e2e2e2" stroke="#cacaca"/></svg>
<svg style="left:449px;top:126px" width="16" height="16" viewBox="0 0 16 16"><path d="M8 0.5 L13 4.5 L10.5 4.5 L10.5 8 L5.5 8 L5.5 4.5 L3 4.5 Z" fill="#c6c6c6"/><ellipse cx="8" cy="10" rx="7.5" ry="3" fill="#e2e2e2" stroke="#cacaca"/><ellipse cx="8" cy="12.5" rx="7.5" ry="3" fill="#e2e2e2" stroke="#cacaca"/></svg>
<svg style="left:482px;top:124px" width="18" height="18" viewBox="0 0 18 18"><g transform="translate(0 6)"><path d="M0.6 3 L0.6 8 A7.4 3 0 0 0 15.4 8 L15.4 3" fill="#0c5a5a" stroke="#062c2c" stroke-width="1"/><ellipse cx="8" cy="6.2" rx="7.4" ry="2.8" fill="#0f7c7c" stroke="#062c2c" stroke-width="1"/><ellipse cx="8" cy="3" rx="7.4" ry="2.8" fill="#22d6d6" stroke="#062c2c" stroke-width="1"/></g><circle cx="12" cy="5" r="4.2" fill="#f0f03c" stroke="#6a6a10" stroke-width="1"/><rect x="10.5" y="9" width="3" height="3.5" fill="#ddd" stroke="#333" stroke-width=".8"/></svg>
<svg style="left:505px;top:124px" width="18" height="18" viewBox="0 0 18 18"><g transform="translate(0 6)"><path d="M0.6 3 L0.6 8 A7.4 3 0 0 0 15.4 8 L15.4 3" fill="#0c5a5a" stroke="#062c2c" stroke-width="1"/><ellipse cx="8" cy="6.2" rx="7.4" ry="2.8" fill="#0f7c7c" stroke="#062c2c" stroke-width="1"/><ellipse cx="8" cy="3" rx="7.4" ry="2.8" fill="#22d6d6" stroke="#062c2c" stroke-width="1"/></g><text x="6" y="6" font-family="Liberation Sans,sans-serif" font-size="6.5" font-weight="bold" fill="#111">SQL</text><path d="M1 5 Q1 2 4 2" fill="none" stroke="#111" stroke-width="1"/><path d="M3 0.5 L5 2 L3 3.5 Z" fill="#111"/></svg>
<svg style="left:527px;top:132px" width="6" height="3" viewBox="0 0 6 3"><path d="M0 0 L5.4 0 L2.7 3 Z" fill="#000"/></svg>
<div style="left:537px;top:122px;width:2px;height:23px;border-left:1px solid #b4b4b4;border-right:1px solid #fff"></div>
<svg style="left:543px;top:124px" width="18" height="18" viewBox="0 0 18 18"><g transform="translate(0 6)"><path d="M0.6 3 L0.6 8 A7.4 3 0 0 0 15.4 8 L15.4 3" fill="#0c5a5a" stroke="#062c2c" stroke-width="1"/><ellipse cx="8" cy="6.2" rx="7.4" ry="2.8" fill="#0f7c7c" stroke="#062c2c" stroke-width="1"/><ellipse cx="8" cy="3" rx="7.4" ry="2.8" fill="#22d6d6" stroke="#062c2c" stroke-width="1"/></g><g transform="translate(2 0) scale(.6)"><path d="M2.5 0.5 H5.5 V3 L6.5 4 V13.5 H0.5 V7 L2.5 3.5 Z" fill="#000"/><path d="M12.5 0.5 H9.5 V3 L8.5 4 V13.5 H14.5 V7 L12.5 3.5 Z" fill="#000"/><rect x="6" y="4.5" width="3" height="4" fill="#000"/><path d="M2 8.5 L2.9 5.5 M13 8.5 L12.1 5.5" stroke="#fff" stroke-width=".8"/></g></svg>
<svg style="left:567px;top:124px" width="18" height="18" viewBox="0 0 18 18"><g transform="translate(0 6)"><path d="M0.6 3 L0.6 8 A7.4 3 0 0 0 15.4 8 L15.4 3" fill="#0c5a5a" stroke="#062c2c" stroke-width="1"/><ellipse cx="8" cy="6.2" rx="7.4" ry="2.8" fill="#0f7c7c" stroke="#062c2c" stroke-width="1"/><ellipse cx="8" cy="3" rx="7.4" ry="2.8" fill="#22d6d6" stroke="#062c2c" stroke-width="1"/></g><path d="M8 4 Q10 0.5 13.5 2.5" fill="none" stroke="#2a3ad0" stroke-width="1.5"/><path d="M15 0.5 L15 5 L11 4 Z" fill="#2a3ad0"/><path d="M2 3.5 L6.5 8 M6.5 3.5 L2 8" stroke="#e01818" stroke-width="1.7"/></svg>
<div style="left:590px;top:122px;width:2px;height:23px;border-left:1px solid #b4b4b4;border-right:1px solid #fff"></div>
<svg style="left:598px;top:126px" width="17" height="16" viewBox="0 0 17 16"><path d="M5.5 6.5 L13.5 15 M11.5 6.5 L3.5 15" stroke="#2e340a" stroke-width="4.2"/><path d="M5.5 6.5 L13.5 15 M11.5 6.5 L3.5 15" stroke="#c8d24a" stroke-width="1.8"/><path d="M1 2.5 L3 0.8 L6.5 0.8 L8.2 3 L8.2 6 L6 8 L3 8 L1 6 Z" fill="#c8d24a" stroke="#2e340a" stroke-width="1.2"/><path d="M9 2.5 L11 0.8 L14.5 0.8 L16.2 3 L16.2 6 L14 8 L11 8 L9 6 Z" fill="#c8d24a" stroke="#2e340a" stroke-width="1.2"/><circle cx="4.2" cy="3.8" r="1.1" fill="#2e340a"/><circle cx="13" cy="3.8" r="1.1" fill="#2e340a"/></svg>
<svg style="left:620px;top:125px" width="17" height="17" viewBox="0 0 17 17"><rect x="1" y="2" width="15" height="14" fill="#f2f06a" stroke="#26280a" stroke-width="1.4"/><rect x="5" y="0.8" width="7" height="2.6" fill="#26280a"/><path d="M1 6.8 L16 6.8 M1 11.4 L16 11.4" stroke="#26280a" stroke-width="1"/><path d="M9 8.2 L11.2 10.6 L15.4 5 M9 13 L11.2 15.2 L15.4 9.8" fill="none" stroke="#18962a" stroke-width="1.8"/></svg>
<svg style="left:644px;top:125px" width="17" height="17" viewBox="0 0 17 17"><path d="M1 0.8 L8 0.8 L11 3.8 L11 14 L1 14 Z" fill="#f6f6f6" stroke="#8a8a8a" stroke-width="1"/><path d="M3 5 L8 5 M3 7.5 L7 7.5" stroke="#aaa" stroke-width="1"/><circle cx="11" cy="11" r="5" fill="#fff" stroke="#777" stroke-width="1.1"/><path d="M11 8 L11 11 L13.5 11" fill="none" stroke="#555" stroke-width="1"/></svg>
<div style="left:666px;top:122px;width:2px;height:23px;border-left:1px solid #b4b4b4;border-right:1px solid #fff"></div>
<svg style="left:675px;top:126px" width="15" height="16" viewBox="0 0 15 16"><path d="M1.5 14 L8 7.5" stroke="#000" stroke-width="3" stroke-linecap="round"/><path d="M13.5 2 A4 4 0 1 0 13.8 7.6 L11 7.4 L9.6 5.4 L11 3.2 Z" fill="#000"/></svg>
<svg style="left:707px;top:126px" width="15" height="15" viewBox="0 0 15 15"><path d="M1 9 L9 3 L13 8 L5 14 Z" fill="#c0c0c0"/><path d="M11 1 L14 4" stroke="#d0d0d0" stroke-width="1.5"/></svg>
<svg style="left:730px;top:126px" width="15" height="15" viewBox="0 0 15 15"><path d="M1 8 L8 3 L14 7 L7 13 Z" fill="#f4f4f4" stroke="#d0d0d0" stroke-width="1.2"/></svg>
<svg style="left:754px;top:125px" width="16" height="17" viewBox="0 0 16 17"><path d="M1 8 L8 2.5 L14 7 L7 13 Z" fill="#e01c1c" stroke="#5a0a0a" stroke-width="1"/><path d="M1 8 L1 11 L7 16 L7 13 M7 16 L14 10 L14 7" fill="#9a1010" stroke="#5a0a0a" stroke-width="1"/><path d="M2 10 L7 14.3 L13.5 8.7" fill="none" stroke="#eee" stroke-width=".8"/></svg>
<svg style="left:777px;top:125px" width="16" height="17" viewBox="0 0 16 17"><path d="M1 8 L8 2.5 L14 7 L7 13 Z" fill="#e01c1c" stroke="#5a0a0a" stroke-width="1"/><path d="M1 8 L1 11 L7 16 L7 13 M7 16 L14 10 L14 7" fill="#9a1010" stroke="#5a0a0a" stroke-width="1"/><path d="M2 10 L7 14.3 L13.5 8.7" fill="none" stroke="#eee" stroke-width=".8"/><path d="M7 1 L13 0.5 L15 4 L12 7 L7.5 5 Z" fill="#f0ee3a" stroke="#8a8a20" stroke-width=".6"/></svg>
<svg style="left:800px;top:125px" width="16" height="17" viewBox="0 0 16 17"><path d="M1 8 L8 2.5 L14 7 L7 13 Z" fill="#e01c1c" stroke="#5a0a0a" stroke-width="1"/><path d="M1 8 L1 11 L7 16 L7 13 M7 16 L14 10 L14 7" fill="#9a1010" stroke="#5a0a0a" stroke-width="1"/><path d="M2 10 L7 14.3 L13.5 8.7" fill="none" stroke="#eee" stroke-width=".8"/><rect x="8" y="0.5" width="4" height="6" fill="#777" stroke="#111" stroke-width=".8"/><rect x="11" y="2" width="3.5" height="5.5" fill="#aaa" stroke="#111" stroke-width=".8"/></svg>
<svg style="left:824px;top:125px" width="16" height="17" viewBox="0 0 16 17"><path d="M1 8 L8 2.5 L14 7 L7 13 Z" fill="#e01c1c" stroke="#5a0a0a" stroke-width="1"/><path d="M1 8 L1 11 L7 16 L7 13 M7 16 L14 10 L14 7" fill="#9a1010" stroke="#5a0a0a" stroke-width="1"/><path d="M2 10 L7 14.3 L13.5 8.7" fill="none" stroke="#eee" stroke-width=".8"/><path d="M7 8 L12 3" stroke="#111" stroke-width="2.2"/><circle cx="13" cy="2.5" r="2" fill="#111"/></svg>
<svg style="left:857px;top:126px" width="17" height="16" viewBox="0 0 17 16"><path d="M1 5 L8.5 5 L8.5 1 L16 8 L8.5 15 L8.5 11 L1 11 Z" fill="#1c78e0" stroke="#0c3a80" stroke-width="1"/></svg>
<svg style="left:880px;top:126px" width="17" height="16" viewBox="0 0 17 16"><path d="M1 5 L8.5 5 L8.5 1 L16 8 L8.5 15 L8.5 11 L1 11 Z" fill="#f03c1c" stroke="#80180c" stroke-width="1"/></svg>
<svg style="left:903px;top:126px" width="18" height="16" viewBox="0 0 18 16"><path d="M0 9 L3 6.5 L3 11.5 Z" fill="#111"/><rect x="4" y="6" width="13" height="8.5" rx="1" fill="#c01010" stroke="#4a0606" stroke-width="1"/><path d="M8 6 L8 3.5 L13 3.5 L13 6" fill="none" stroke="#4a0606" stroke-width="1.5"/><rect x="9.5" y="8" width="2.4" height="2.4" fill="#f0d0d0"/></svg>
<svg style="left:938px;top:125px" width="16" height="17" viewBox="0 0 16 17"><rect x="2" y="7" width="8" height="7" fill="#d2d2d2" stroke="#bdbdbd" stroke-width="1"/><path d="M2 7 L4 5.5 L7 5.5 L8 7" fill="#d2d2d2" stroke="#bdbdbd"/><path d="M7 6 Q8 1 12 3" fill="none" stroke="#c6c6c6" stroke-width="1.3"/></svg>
<svg style="left:961px;top:125px" width="16" height="17" viewBox="0 0 16 17"><rect x="2" y="7" width="8" height="7" fill="#d2d2d2" stroke="#bdbdbd" stroke-width="1"/><path d="M2 7 L4 5.5 L7 5.5 L8 7" fill="#d2d2d2" stroke="#bdbdbd"/><path d="M10 1 L14 4 L10 7 Z" fill="#c8c8c8"/></svg>
<svg style="left:984px;top:125px" width="16" height="17" viewBox="0 0 16 17"><rect x="2" y="7" width="8" height="7" fill="#d2d2d2" stroke="#bdbdbd" stroke-width="1"/><path d="M2 7 L4 5.5 L7 5.5 L8 7" fill="#d2d2d2" stroke="#bdbdbd"/><path d="M14 1 L10 4 L14 7 Z" fill="#c8c8c8"/></svg>
<svg style="left:1008px;top:125px" width="16" height="17" viewBox="0 0 16 17"><rect x="2" y="7" width="8" height="7" fill="#d2d2d2" stroke="#bdbdbd" stroke-width="1"/><path d="M2 7 L4 5.5 L7 5.5 L8 7" fill="#d2d2d2" stroke="#bdbdbd"/><path d="M5 5 Q6 0 10 2 M12 1 L14 4 L11 6" fill="none" stroke="#c6c6c6" stroke-width="1.2"/></svg>
<svg style="left:1031px;top:125px" width="16" height="17" viewBox="0 0 16 17"><rect x="2" y="7" width="8" height="7" fill="#d2d2d2" stroke="#bdbdbd" stroke-width="1"/><path d="M2 7 L4 5.5 L7 5.5 L8 7" fill="#d2d2d2" stroke="#bdbdbd"/><path d="M10 1 L14 4 L10 7 Z" fill="#c8c8c8"/></svg>
<svg style="left:1055px;top:125px" width="16" height="17" viewBox="0 0 16 17"><rect x="2" y="7" width="8" height="7" fill="#d2d2d2" stroke="#bdbdbd" stroke-width="1"/><path d="M2 7 L4 5.5 L7 5.5 L8 7" fill="#d2d2d2" stroke="#bdbdbd"/><path d="M8 4 L11 1 L14 4 L11 7 Z" fill="#d8d8d8"/></svg>
<svg style="left:1078px;top:125px" width="16" height="17" viewBox="0 0 16 17"><rect x="2" y="7" width="8" height="7" fill="#d2d2d2" stroke="#bdbdbd" stroke-width="1"/><path d="M2 7 L4 5.5 L7 5.5 L8 7" fill="#d2d2d2" stroke="#bdbdbd"/><rect x="8" y="2" width="7" height="3" fill="#c8c8c8"/></svg>
<svg style="left:1101px;top:125px" width="16" height="17" viewBox="0 0 16 17"><rect x="2" y="7" width="8" height="7" fill="#d2d2d2" stroke="#bdbdbd" stroke-width="1"/><path d="M2 7 L4 5.5 L7 5.5 L8 7" fill="#d2d2d2" stroke="#bdbdbd"/><path d="M7 5 L11 0.5 L15 5 L11 8 Z" fill="#d8d8d8"/></svg>
<svg style="left:1125px;top:125px" width="16" height="17" viewBox="0 0 16 17"><rect x="2" y="7" width="8" height="7" fill="#d2d2d2" stroke="#bdbdbd" stroke-width="1"/><path d="M2 7 L4 5.5 L7 5.5 L8 7" fill="#d2d2d2" stroke="#bdbdbd"/><circle cx="10" cy="4" r="3" fill="none" stroke="#d0d0d0" stroke-width="1.3"/><path d="M12 6 L15 9" stroke="#d0d0d0" stroke-width="1.5"/></svg>
<svg style="left:1148px;top:125px" width="16" height="17" viewBox="0 0 16 17"><rect x="2" y="7" width="8" height="7" fill="#d2d2d2" stroke="#bdbdbd" stroke-width="1"/><path d="M2 7 L4 5.5 L7 5.5 L8 7" fill="#d2d2d2" stroke="#bdbdbd"/><path d="M6 3 L7 1 L9 4 L11 1 L13 4 L14 2" fill="none" stroke="#c6c6c6" stroke-width="1"/></svg>
<svg style="left:1172px;top:125px" width="16" height="17" viewBox="0 0 16 17"><rect x="2" y="7" width="8" height="7" fill="#d2d2d2" stroke="#bdbdbd" stroke-width="1"/><path d="M2 7 L4 5.5 L7 5.5 L8 7" fill="#d2d2d2" stroke="#bdbdbd"/><path d="M8 3 L13 3 M11 1 L14 3 L11 5.5" fill="none" stroke="#c6c6c6" stroke-width="1.2"/><path d="M7 15.5 L14 15.5" stroke="#c0c0c0" stroke-width="1.2" stroke-dasharray="1.5 1.5"/></svg>
<svg style="left:1195px;top:125px" width="16" height="17" viewBox="0 0 16 17"><rect x="2" y="7" width="8" height="7" fill="#d2d2d2" stroke="#bdbdbd" stroke-width="1"/><path d="M2 7 L4 5.5 L7 5.5 L8 7" fill="#d2d2d2" stroke="#bdbdbd"/><path d="M14 1 L10 4 L14 7 Z" fill="#c8c8c8"/><path d="M7 15.5 L14 15.5" stroke="#c0c0c0" stroke-width="1.2" stroke-dasharray="1.5 1.5"/></svg>
<svg style="left:1218px;top:125px" width="16" height="17" viewBox="0 0 16 17"><rect x="2" y="7" width="8" height="7" fill="#d2d2d2" stroke="#bdbdbd" stroke-width="1"/><path d="M2 7 L4 5.5 L7 5.5 L8 7" fill="#d2d2d2" stroke="#bdbdbd"/><path d="M5 5 Q6 0 10 2 M12 1 L14 4 L11 6" fill="none" stroke="#c6c6c6" stroke-width="1.2"/><path d="M7 15.5 L14 15.5" stroke="#c0c0c0" stroke-width="1.2" stroke-dasharray="1.5 1.5"/></svg>
<svg style="left:1242px;top:125px" width="16" height="17" viewBox="0 0 16 17"><rect x="2" y="7" width="8" height="7" fill="#d2d2d2" stroke="#bdbdbd" stroke-width="1"/><path d="M2 7 L4 5.5 L7 5.5 L8 7" fill="#d2d2d2" stroke="#bdbdbd"/><path d="M8 3 L13 3 M11 1 L14 3 L11 5.5" fill="none" stroke="#c6c6c6" stroke-width="1.2"/><path d="M7 15.5 L14 15.5" stroke="#c0c0c0" stroke-width="1.2" stroke-dasharray="1.5 1.5"/></svg>
<svg style="left:1265px;top:125px" width="16" height="17" viewBox="0 0 16 17"><rect x="2" y="7" width="8" height="7" fill="#d2d2d2" stroke="#bdbdbd" stroke-width="1"/><path d="M2 7 L4 5.5 L7 5.5 L8 7" fill="#d2d2d2" stroke="#bdbdbd"/><path d="M8 4 L12 2 L14 3 L13 5" fill="none" stroke="#c6c6c6" stroke-width="1.2"/><path d="M7 15.5 L14 15.5" stroke="#c0c0c0" stroke-width="1.2" stroke-dasharray="1.5 1.5"/></svg>
<svg style="left:1289px;top:126px" width="16" height="16" viewBox="0 0 16 16"><path d="M2 7 L8 7 L8 2 L15 9 L8 15 L8 11 L2 11 Z" fill="#dcdcdc" stroke="#cdcdcd"/></svg>
<svg style="left:1312px;top:125px" width="16" height="16" viewBox="0 0 16 16"><path d="M1 7 L5 7 L6 8.2 L11 8.2 L11 15 L1 15 Z" fill="#e87a1c" stroke="#2a1604" stroke-width="1.2"/><path d="M7 7 L12 2" stroke="#111" stroke-width="2"/><circle cx="12.5" cy="2.5" r="2.2" fill="#111"/></svg>
<div style="left:325px;top:151px;width:402px;height:18px;background:linear-gradient(180deg,#f6f6f6,#ececec);border:1px solid #b4b4b4;border-radius:2px"></div>
<div class="u" style="left:328px;top:155.0px;"><i class="d">1</i><i class="c">链接</i></div>
<div style="left:685.5px;top:156.5px;width:7.5px;height:7.5px;border:1px solid #000;border-top-width:1.6px"></div>
<svg style="left:699.5px;top:155.5px" width="8" height="9" viewBox="0 0 9 10"><path d="M2.5 0.5 L6.5 0.5 L6.5 5.5 L2.5 5.5 Z M5.5 0.5 L5.5 5.5 M1 6 L8 6 M4.5 6 L4.5 10" stroke="#000" stroke-width="1.2" fill="none"/></svg>
<svg style="left:714px;top:156px" width="9" height="9" viewBox="0 0 9 9"><path d="M0.5 0.5 L8.5 8.5 M8.5 0.5 L0.5 8.5" stroke="#000" stroke-width="1.1" fill="none"/></svg>
<svg style="left:329px;top:176px" width="12" height="12" viewBox="0 0 12 12"><path d="M8.5 3.2 A4 4 0 1 0 9.6 7.4" stroke="#000" stroke-width="2" fill="none"/><path d="M6 0 L11 0 L11 5 Z" fill="#000"/></svg>
<svg style="left:347px;top:176px" width="11" height="11" viewBox="0 0 11 11"><path d="M4 1 L7 1 L7 4 L10 4 L10 7 L7 7 L7 10 L4 10 L4 7 L1 7 L1 4 L4 4 Z" fill="#fff" stroke="#111" stroke-width="1.3"/></svg>
<svg style="left:365px;top:179px" width="12" height="5" viewBox="0 0 12 5"><rect x="1" y="1" width="10" height="3" fill="#666" stroke="#333" stroke-width="1"/></svg>
<svg style="left:383px;top:176px" width="14" height="13" viewBox="0 0 14 13"><path d="M1 8 L6 1 L9 2 L5 7 Z" fill="#000"/><path d="M6 4 L9 9" stroke="#000" stroke-width="2"/><rect x="7" y="8" width="6" height="4" fill="#999" stroke="#000" stroke-width="1.2"/></svg>
<div style="left:325px;top:192px;width:402px;height:189px;background:#fff;border:1px solid #828790"></div>
<div style="left:338px;top:203px;width:1px;height:24px;border-left:1px dotted #909090"></div>
<div style="left:338px;top:203px;width:12px;height:1px;border-top:1px dotted #909090"></div>
<svg style="left:350px;top:195.6px" width="16" height="14" viewBox="0 0 16 14"><path d="M1 2.5 Q1 1 2.5 1 L6 1 L7.5 2.5 L14 2.5 Q15 2.5 15 3.5 L15 12 L1 12 Z" fill="#e6e8a8" stroke="#6b6b55" stroke-width="1"/><rect x="1.5" y="4" width="13" height="8" fill="#c9d070"/><path d="M1 12.5 L15 12.5" stroke="#222" stroke-width="1.4"/></svg>
<div class="u" style="left:370px;top:197.6px;"><i class="c">载入固定用户</i></div>
<div style="left:338px;top:219px;width:12px;height:1px;border-top:1px dotted #909090"></div>
<svg style="left:350px;top:211.79999999999998px" width="16" height="14" viewBox="0 0 16 14"><path d="M1 2.5 Q1 1 2.5 1 L6 1 L7.5 2.5 L14 2.5 Q15 2.5 15 3.5 L15 12 L1 12 Z" fill="#e6e8a8" stroke="#6b6b55" stroke-width="1"/><rect x="1.5" y="4" width="13" height="8" fill="#c9d070"/><path d="M1 12.5 L15 12.5" stroke="#222" stroke-width="1.4"/></svg>
<div class="u" style="left:370px;top:213.79999999999998px;"><i class="c">输入历史</i></div>
<svg style="left:337px;top:230.5px" width="6" height="9" viewBox="0 0 6 9"><path d="M0.8 0.8 L5 4.5 L0.8 8.2 Z" fill="#fff" stroke="#a6a6a6" stroke-width="1"/></svg>
<div style="left:345px;top:235px;width:5px;height:1px;border-top:1px dotted #909090"></div>
<svg style="left:350px;top:228.0px" width="16" height="14" viewBox="0 0 16 14"><path d="M1 2.5 Q1 1 2.5 1 L6 1 L7.5 2.5 L14 2.5 Q15 2.5 15 3.5 L15 12 L1 12 Z" fill="#e4e4e4" stroke="#6b6b55" stroke-width="1"/><rect x="1.5" y="4" width="13" height="8" fill="#d8d8d8"/><path d="M1 12.5 L15 12.5" stroke="#222" stroke-width="1.4"/></svg>
<div class="u" style="left:370px;top:230.0px;"><i class="c">最近</i>...</div>
<div style="left:325px;top:385px;width:402px;height:18px;background:linear-gradient(180deg,#f6f6f6,#ececec);border:1px solid #b4b4b4;border-radius:2px"></div>
<div class="u" style="left:328px;top:389.0px;"><i class="c">对象</i></div>
<div style="left:685.5px;top:390.5px;width:7.5px;height:7.5px;border:1px solid #000;border-top-width:1.6px"></div>
<svg style="left:699.5px;top:389.5px" width="8" height="9" viewBox="0 0 9 10"><path d="M2.5 0.5 L6.5 0.5 L6.5 5.5 L2.5 5.5 Z M5.5 0.5 L5.5 5.5 M1 6 L8 6 M4.5 6 L4.5 10" stroke="#000" stroke-width="1.2" fill="none"/></svg>
<svg style="left:714px;top:390px" width="9" height="9" viewBox="0 0 9 9"><path d="M0.5 0.5 L8.5 8.5 M8.5 0.5 L0.5 8.5" stroke="#000" stroke-width="1.1" fill="none"/></svg>
<div style="left:325px;top:406px;width:402px;height:22px;background:#fff"></div>
<div style="left:325px;top:427px;width:402px;height:2px;background:#555"></div>
<div style="left:328px;top:408px;width:38px;height:20px;background:#f0f0f0;border:1px solid #444;border-bottom:none;border-radius:2px 2px 0 0;border-left-color:#fff;box-shadow:-1px 0 0 #444"></div>
<div class="u" style="left:334px;top:413.5px;"><i class="c">对象</i></div>
<div class="u" style="left:369px;top:413.5px;"><i class="c">文件</i></div>
<svg style="left:329px;top:434px" width="12" height="12" viewBox="0 0 12 12"><path d="M8.5 3.2 A4 4 0 1 0 9.6 7.4" stroke="#000" stroke-width="2" fill="none"/><path d="M6 0 L11 0 L11 5 Z" fill="#000"/></svg>
<svg style="left:347px;top:434px" width="11" height="11" viewBox="0 0 11 11"><path d="M4 1 L7 1 L7 4 L10 4 L10 7 L7 7 L7 10 L4 10 L4 7 L1 7 L1 4 L4 4 Z" fill="#fff" stroke="#111" stroke-width="1.3"/></svg>
<svg style="left:365px;top:437px" width="12" height="5" viewBox="0 0 12 5"><rect x="1" y="1" width="10" height="3" fill="#666" stroke="#333" stroke-width="1"/></svg>
<svg style="left:383px;top:434px" width="13" height="12" viewBox="0 0 13 12"><g transform="scale(.87 .85)"><path d="M2.5 0.5 H5.5 V3 L6.5 4 V13.5 H0.5 V7 L2.5 3.5 Z" fill="#000"/><path d="M12.5 0.5 H9.5 V3 L8.5 4 V13.5 H14.5 V7 L12.5 3.5 Z" fill="#000"/><rect x="6" y="4.5" width="3" height="4" fill="#000"/></g></svg>
<svg style="left:403px;top:434px" width="13" height="12" viewBox="0 0 13 12"><path d="M0.5 7.5 L5.5 1 L8.5 2.2 L4 8 Z" fill="#000"/><path d="M5.5 4 L8 7" stroke="#000" stroke-width="2"/><path d="M5.5 7 L12.5 7 L10 10 L10 12.5 L8 12.5 L8 10 Z" fill="#000"/></svg>
<svg style="left:421px;top:434px" width="14" height="13" viewBox="0 0 14 13"><path d="M1 8 L6 1 L9 2 L5 7 Z" fill="#000"/><path d="M6 4 L9 9" stroke="#000" stroke-width="2"/><rect x="7" y="8" width="6" height="4" fill="#999" stroke="#000" stroke-width="1.2"/></svg>
<div style="left:326px;top:453px;width:399px;height:19px;background:linear-gradient(180deg,#f2f2f2,#e2e2e2 60%,#d6d6d6);border:1px solid #8e8e8e;border-radius:3px"></div>
<div class="u" style="left:330px;top:457.5px;">&lt;<i class="c">当前用户</i>&gt;</div>
<svg style="left:712px;top:460px" width="9" height="5" viewBox="0 0 9 5"><path d="M0 0 L9 0 L4.5 5 Z" fill="#000"/></svg>
<div style="left:326px;top:478px;width:399px;height:20px;background:linear-gradient(180deg,#f2f2f2,#e2e2e2 60%,#d6d6d6);border:1px solid #8e8e8e;border-radius:3px"></div>
<div class="u" style="left:330px;top:482.5px;">All objects</div>
<svg style="left:712px;top:486px" width="9" height="5" viewBox="0 0 9 5"><path d="M0 0 L9 0 L4.5 5 Z" fill="#000"/></svg>
<div style="left:326px;top:503px;width:399px;height:20px;background:#fff;border:1px solid #e2e2e2"></div>
<div class="u" style="left:330px;top:507.5px;color:#7c7c7c"><i class="c" style="font-style:italic">输入搜索文档</i></div>
<div style="left:325px;top:528px;width:402px;height:94px;background:#fff;border:1px solid #828790;overflow:hidden"></div>
<svg style="left:337px;top:533.9px" width="6" height="9" viewBox="0 0 6 9"><path d="M0.8 0.8 L5 4.5 L0.8 8.2 Z" fill="#fff" stroke="#a6a6a6" stroke-width="1"/></svg>
<div style="left:345px;top:538px;width:5px;height:1px;border-top:1px dotted #909090"></div>
<svg style="left:350px;top:531.4px" width="16" height="14" viewBox="0 0 16 14"><path d="M1 2.5 Q1 1 2.5 1 L6 1 L7.5 2.5 L14 2.5 Q15 2.5 15 3.5 L15 12 L1 12 Z" fill="#e6e8a8" stroke="#6b6b55" stroke-width="1"/><rect x="1.5" y="4" width="13" height="8" fill="#c9d070"/><path d="M1 12.5 L15 12.5" stroke="#222" stroke-width="1.4"/></svg>
<div class="u" style="left:370px;top:533.4px;"><i class="c">最近对象</i></div>
<svg style="left:337px;top:550.3px" width="6" height="9" viewBox="0 0 6 9"><path d="M0.8 0.8 L5 4.5 L0.8 8.2 Z" fill="#fff" stroke="#a6a6a6" stroke-width="1"/></svg>
<div style="left:345px;top:555px;width:5px;height:1px;border-top:1px dotted #909090"></div>
<svg style="left:350px;top:547.8px" width="16" height="14" viewBox="0 0 16 14"><path d="M1 2.5 Q1 1 2.5 1 L6 1 L7.5 2.5 L14 2.5 Q15 2.5 15 3.5 L15 12 L1 12 Z" fill="#e6e8a8" stroke="#6b6b55" stroke-width="1"/><rect x="1.5" y="4" width="13" height="8" fill="#c9d070"/><path d="M1 12.5 L15 12.5" stroke="#222" stroke-width="1.4"/></svg>
<div class="u" style="left:370px;top:549.8px;"><i class="c">回收站</i></div>
<svg style="left:337px;top:566.6999999999999px" width="6" height="9" viewBox="0 0 6 9"><path d="M0.8 0.8 L5 4.5 L0.8 8.2 Z" fill="#fff" stroke="#a6a6a6" stroke-width="1"/></svg>
<div style="left:345px;top:571px;width:5px;height:1px;border-top:1px dotted #909090"></div>
<svg style="left:350px;top:564.1999999999999px" width="16" height="14" viewBox="0 0 16 14"><path d="M1 2.5 Q1 1 2.5 1 L6 1 L7.5 2.5 L14 2.5 Q15 2.5 15 3.5 L15 12 L1 12 Z" fill="#e6e8a8" stroke="#6b6b55" stroke-width="1"/><rect x="1.5" y="4" width="13" height="8" fill="#c9d070"/><path d="M1 12.5 L15 12.5" stroke="#222" stroke-width="1.4"/></svg>
<div class="u" style="left:370px;top:566.1999999999999px;">Functions</div>
<svg style="left:337px;top:583.1px" width="6" height="9" viewBox="0 0 6 9"><path d="M0.8 0.8 L5 4.5 L0.8 8.2 Z" fill="#fff" stroke="#a6a6a6" stroke-width="1"/></svg>
<div style="left:345px;top:588px;width:5px;height:1px;border-top:1px dotted #909090"></div>
<svg style="left:350px;top:580.6px" width="16" height="14" viewBox="0 0 16 14"><path d="M1 2.5 Q1 1 2.5 1 L6 1 L7.5 2.5 L14 2.5 Q15 2.5 15 3.5 L15 12 L1 12 Z" fill="#e6e8a8" stroke="#6b6b55" stroke-width="1"/><rect x="1.5" y="4" width="13" height="8" fill="#c9d070"/><path d="M1 12.5 L15 12.5" stroke="#222" stroke-width="1.4"/></svg>
<div class="u" style="left:370px;top:582.6px;">Procedures</div>
<svg style="left:337px;top:599.5px" width="6" height="9" viewBox="0 0 6 9"><path d="M0.8 0.8 L5 4.5 L0.8 8.2 Z" fill="#fff" stroke="#a6a6a6" stroke-width="1"/></svg>
<div style="left:345px;top:604px;width:5px;height:1px;border-top:1px dotted #909090"></div>
<svg style="left:350px;top:597.0px" width="16" height="14" viewBox="0 0 16 14"><path d="M1 2.5 Q1 1 2.5 1 L6 1 L7.5 2.5 L14 2.5 Q15 2.5 15 3.5 L15 12 L1 12 Z" fill="#e6e8a8" stroke="#6b6b55" stroke-width="1"/><rect x="1.5" y="4" width="13" height="8" fill="#c9d070"/><path d="M1 12.5 L15 12.5" stroke="#222" stroke-width="1.4"/></svg>
<div class="u" style="left:370px;top:599.0px;">Packages</div>
<div style="left:326px;top:612.4px;width:380px;height:8.600000000000023px;overflow:hidden"><svg style="left:11px;top:3.5px" width="6" height="9" viewBox="0 0 6 9"><path d="M0.8 0.8 L5 4.5 L0.8 8.2 Z" fill="#fff" stroke="#a6a6a6"/></svg><svg style="left:24px;top:1px" width="16" height="14" viewBox="0 0 16 14"><path d="M1 2.5 Q1 1 2.5 1 L6 1 L7.5 2.5 L14 2.5 Q15 2.5 15 3.5 L15 12 L1 12 Z" fill="#e6e8a8" stroke="#6b6b55" stroke-width="1"/><rect x="1.5" y="4" width="13" height="8" fill="#c9d070"/><path d="M1 12.5 L15 12.5" stroke="#222" stroke-width="1.4"/></svg><div class="u" style="left:44px;top:3px">Package bodies</div></div>
<div style="left:708px;top:529px;width:18px;height:92px;background:#f0f0f0"></div>
<div style="left:709px;top:547px;width:15px;height:17px;background:linear-gradient(90deg,#f4f4f4,#dcdcdc);border:1px solid #9a9a9a;border-radius:2px"></div>
<svg style="left:713px;top:535px" width="7" height="4" viewBox="0 0 7 4"><path d="M0 4 L3.5 0 L7 4 Z" fill="#555"/></svg>
<svg style="left:713px;top:609px" width="7" height="4" viewBox="0 0 7 4"><path d="M0 0 L7 0 L3.5 4 Z" fill="#555"/></svg>
<div style="left:325px;top:627px;width:402px;height:18px;background:linear-gradient(180deg,#b3c8e2,#a3bbd8);border:1px solid #9eb4cf;border-radius:2px"></div>
<div class="u" style="left:328px;top:631.0px;"><i class="c">窗口列表</i></div>
<div style="left:685.5px;top:632.5px;width:7.5px;height:7.5px;border:1px solid #000;border-top-width:1.6px"></div>
<svg style="left:699.5px;top:631.5px" width="8" height="9" viewBox="0 0 9 10"><path d="M2.5 0.5 L6.5 0.5 L6.5 5.5 L2.5 5.5 Z M5.5 0.5 L5.5 5.5 M1 6 L8 6 M4.5 6 L4.5 10" stroke="#000" stroke-width="1.2" fill="none"/></svg>
<svg style="left:714px;top:632px" width="9" height="9" viewBox="0 0 9 9"><path d="M0.5 0.5 L8.5 8.5 M8.5 0.5 L0.5 8.5" stroke="#000" stroke-width="1.1" fill="none"/></svg>
<div style="left:325px;top:648px;width:402px;height:22px;background:#fff"></div>
<div style="left:325px;top:669px;width:402px;height:2px;background:#555"></div>
<div style="left:328px;top:650px;width:62px;height:20px;background:#f0f0f0;border:1px solid #444;border-bottom:none;border-radius:2px 2px 0 0;border-left-color:#fff;box-shadow:-1px 0 0 #444"></div>
<div class="u" style="left:333px;top:655.5px;"><i class="c">窗口列表</i></div>
<div class="u" style="left:394px;top:655.5px;"><i class="c">模板</i></div>
<div style="left:325px;top:671px;width:402px;height:22px;background:#f0f0f0;border:1px solid;border-color:#fff #a0a0a0 #a0a0a0 #fff;overflow:hidden"></div>
<div style="left:328px;top:675px;width:11px;height:6px;background:#0000e0"></div>
<div style="left:328px;top:683px;width:11px;height:6px;background:#000"></div>
<div class="u wl" style="left:343px;top:676px;width:383px;overflow:hidden">SQL <i class="c">窗口</i> - select ZYH<i class="d">000</i>,BRXM<i class="d">00</i>,BRXB<i class="d">00</i>,BRCSRQ,BRNL<i class="d">00</i>,ZZYS<i class="d">00</i>,ZZYS<i class="d">00</i>,ZZ</div>
<div style="left:325px;top:693px;width:402px;height:22px;background:#f0f0f0;border:1px solid;border-color:#fff #a0a0a0 #a0a0a0 #fff;overflow:hidden"></div>
<div style="left:328px;top:697px;width:11px;height:6px;background:#0000e0"></div>
<div style="left:328px;top:705px;width:11px;height:6px;background:#000"></div>
<div class="u wl" style="left:343px;top:698px;width:383px;overflow:hidden">SQL <i class="c">窗口</i> - select A.*, b.ryzd<i class="d">00</i>, b.mzzd<i class="d">00</i>, '' mzzdbm, substr(a.zyh</div>
<div style="left:325px;top:715px;width:402px;height:22px;background:#f0f0f0;border:1px solid;border-color:#fff #a0a0a0 #a0a0a0 #fff;overflow:hidden"></div>
<div style="left:328px;top:719px;width:11px;height:6px;background:#0000e0"></div>
<div style="left:328px;top:727px;width:11px;height:6px;background:#000"></div>
<div class="u wl" style="left:343px;top:720px;width:383px;overflow:hidden">SQL <i class="c">窗口</i> - select * from ZY_BRDB<i class="d">00</i> where zyid<i class="d">00</i>=<i class="d">2426618</i> select * f</div>
<div style="left:325px;top:737px;width:402px;height:22px;background:#f0f0f0;border:1px solid;border-color:#fff #a0a0a0 #a0a0a0 #fff;overflow:hidden"></div>
<div style="left:328px;top:741px;width:11px;height:6px;background:#000"></div>
<div style="left:328px;top:749px;width:11px;height:6px;background:#000"></div>
<div class="u wl" style="left:343px;top:742px;width:383px;overflow:hidden">SQL <i class="c">窗口</i> - <i class="c">编辑</i> view SD_HOSPITAL.VW_ZY_BRDB<i class="d">00</i>@ORCL <i class="c">的源</i></div>
<div style="left:325px;top:760px;width:402px;height:22px;background:#f0f0f0;border:1px solid;border-color:#fff #a0a0a0 #a0a0a0 #fff;overflow:hidden"></div>
<div style="left:328px;top:764px;width:11px;height:6px;background:#b0b0b0"></div>
<div style="left:328px;top:772px;width:11px;height:6px;background:#b0b0b0"></div>
<div class="u wl" style="left:343px;top:765px;width:383px;overflow:hidden"><i class="c">编辑</i> <i class="c">表</i> SD_ZY.ZY_BRDB<i class="d">00</i>@ORCL</div>
<div style="left:325px;top:783px;width:402px;height:22px;background:#fff;overflow:hidden"></div>
<div style="left:328px;top:787px;width:11px;height:6px;background:#0000e0"></div>
<div style="left:328px;top:795px;width:11px;height:6px;background:#000"></div>
<div class="u wl" style="left:343px;top:788px;width:383px;overflow:hidden">SQL <i class="c">窗口</i> - select * from sf_fymx<i class="d">00</i> where czrq<i class="d">00</i>='<i class="d">20210418</i>' and zxys</div>
<div style="left:729px;top:147px;width:1px;height:22px;background:#a8a8a8"></div>
<div style="left:1543px;top:148px;width:3px;height:766px;background:#fafafa"></div>
<div style="left:729px;top:168px;width:814px;height:746px;background:#f0f0f0;border:1px solid #9a9a9a;border-color:#9a9a9a #b8b8b8 #b8b8b8 #8a8a8a"></div>
<div style="left:782px;top:151px;width:47px;height:18px;background:linear-gradient(180deg,#f6f6f6,#e2e2e2);border:1px solid #9a9a9a;border-bottom:none"></div>
<div style="left:830px;top:151px;width:46px;height:18px;background:linear-gradient(180deg,#f6f6f6,#e2e2e2);border:1px solid #9a9a9a;border-bottom:none"></div>
<div style="left:730px;top:148px;width:52px;height:21px;background:#fafafa;border:1px solid #9a9a9a;border-bottom:none"></div>
<div class="u" style="left:736px;top:153px;">SQL</div>
<div class="u" style="left:786px;top:154px;"><i class="c">输出</i></div>
<div class="u" style="left:834px;top:154px;"><i class="c">统计表</i></div>
<div style="left:734px;top:172px;width:778px;height:362px;background:#fff;border:1px solid #c4c4c4;border-left-color:#a0a0a0;border-top-color:#a8a8a8"></div>
<div style="left:737px;top:207.5px;width:774px;height:31.5px;background:#a9cbee"></div>
<div class="e" style="left:737px;top:176px"><span class="k">select</span> <span class="n">*</span> <span class="k">from</span> sf_fymx<i class="d">00</i> <span class="k">where</span> czrq<i class="d">00</i>=<span class="s">'<i class="d">20210418</i>'</span> <span class="k">and</span> zxys<i class="d">00</i>=<span class="s">'<i class="d">1097</i>'</span> <span class="k">and</span> cxbz<i class="d">00</i>=<span class="s">'-'</span><span class="n">;</span></div>
<div class="e" style="left:737px;top:208.6px;width:768px;overflow:hidden;white-space:pre"><span class="k">select</span> <span class="n">*</span>  <span class="k">from</span> sf_fymx<i class="d">00</i> <span class="k">where</span> mxid<i class="d">00</i> <span class="k">in</span><span class="n">(</span><span class="k">select</span> omxid<i class="d">0</i> <span class="k">from</span> sf_fymx<i class="d">00</i> <span class="k">where</span> czrq<i class="d">00</i>=<span class="s">'<i class="d">20210418</i>'</span> <span class="k">and</span> zxys<i class="d">00</i>=<span class="s">'<i class="d">1097</i>'</span></div>
<div class="e" style="left:737px;top:224.9px"><span class="n">)</span></div>
<div class="e" style="left:737px;top:241.2px"><span class="k">select</span> <span class="n">*</span> <span class="k">from</span> bm_ygbm<i class="d">00</i> <span class="k">where</span> zwxm<i class="d">00</i>=<span class="s">'<i class="c">卓蔚青</i>'</span></div>
<div style="left:1512px;top:173px;width:28px;height:361px;background:#fff"></div>
<svg style="left:1522px;top:182px" width="11" height="11" viewBox="0 0 11 11"><path d="M5.5 0.6 L10.4 5.6 L7.6 5.6 L7.6 10.4 L3.4 10.4 L3.4 5.6 L0.6 5.6 Z" fill="#17b290" stroke="#0b3b33" stroke-width="1.1"/></svg>
<svg style="left:1522px;top:210px" width="11" height="11" viewBox="0 0 11 11"><path d="M5.5 10.4 L10.4 5.4 L7.6 5.4 L7.6 0.6 L3.4 0.6 L3.4 5.4 L0.6 5.4 Z" fill="#17b290" stroke="#0b3b33" stroke-width="1.1"/></svg>
<div style="left:1540px;top:169px;width:2px;height:366px;background:#fff"></div>
<div style="left:735px;top:516px;width:776px;height:16px;background:#efefef;border-top:1px solid #e4e4e4"></div>
<div style="left:754px;top:516px;width:555px;height:16px;background:linear-gradient(180deg,#f3f3f3,#e3e3e3 50%,#d2d2d2 52%,#dcdcdc);border:1px solid #9a9a9a;border-radius:2px"></div>
<div style="left:1028px;top:521px;width:1px;height:6px;background:#555"></div>
<div style="left:1031px;top:521px;width:1px;height:6px;background:#555"></div>
<div style="left:1034px;top:521px;width:1px;height:6px;background:#555"></div>
<svg style="left:741px;top:521px" width="4" height="7" viewBox="0 0 4 7"><path d="M4 0 L0 3.5 L4 7 Z" fill="#444"/></svg>
<svg style="left:1500px;top:521px" width="4" height="7" viewBox="0 0 4 7"><path d="M0 0 L4 3.5 L0 7 Z" fill="#444"/></svg>
<div style="left:731px;top:536px;width:811px;height:1px;background:#c4c4c4"></div>
<div style="left:733px;top:561px;width:810px;height:348px;background:#fff;border:1px solid #9a9a9a;border-color:#9a9a9a #c0c0c0 #c0c0c0 #9a9a9a"></div>
<div style="left:737px;top:595px;width:802px;height:310px;border:1px solid #d0d0d0;border-top:none"></div>
<div style="left:736px;top:543px;width:108px;height:19px;background:linear-gradient(180deg,#f6f6f6,#e2e2e2);border:1px solid #9a9a9a;border-bottom:none;border-radius:2px 2px 0 0"></div>
<div style="left:843px;top:540px;width:114px;height:22px;background:#fff;border:1px solid #9a9a9a;border-bottom:none;border-radius:2px 2px 0 0"></div>
<div class="u" style="left:741px;top:546px;">Select sf_fymx<i class="d">00</i></div>
<div class="u" style="left:850px;top:544px;">Select sf_fymx<i class="d">00</i></div>
<div style="left:733px;top:562px;width:810px;height:33px;background:#fcfcfc"></div>
<div style="left:781px;top:567px;width:2px;height:26px;border-left:1px solid #b4b4b4;border-right:1px solid #fff"></div>
<div style="left:893px;top:567px;width:2px;height:26px;border-left:1px solid #b4b4b4;border-right:1px solid #fff"></div>
<div style="left:1006px;top:567px;width:2px;height:26px;border-left:1px solid #b4b4b4;border-right:1px solid #fff"></div>
<div style="left:1091px;top:567px;width:2px;height:26px;border-left:1px solid #b4b4b4;border-right:1px solid #fff"></div>
<div style="left:1125px;top:567px;width:2px;height:26px;border-left:1px solid #b4b4b4;border-right:1px solid #fff"></div>
<div style="left:1157px;top:567px;width:2px;height:26px;border-left:1px solid #b4b4b4;border-right:1px solid #fff"></div>
<svg style="left:743px;top:570px" width="19" height="20" viewBox="0 0 19 20"><rect x="1" y="1" width="13" height="13" fill="#fff" stroke="#222" stroke-width="1.4"/><path d="M7.5 1 L7.5 14 M1 7.5 L14 7.5" stroke="#222" stroke-width="1.4"/><path d="M17 1 L17 14 M15.5 3 L17 0.5 L18.5 3 M15.5 12 L17 14.5 L18.5 12" fill="none" stroke="#2233bb" stroke-width="1"/><path d="M17 6 L17 9" stroke="#e02020" stroke-width="1.2"/><path d="M1 17.5 L14 17.5 M3 16 L0.5 17.5 L3 19 M12 16 L14.5 17.5 L12 19" fill="none" stroke="#2233bb" stroke-width="1"/><path d="M6 17.5 L9 17.5" stroke="#e02020" stroke-width="1.2"/></svg>
<svg style="left:769px;top:579px" width="6" height="3" viewBox="0 0 6 3"><path d="M0 0 L5.4 0 L2.7 3 Z" fill="#000"/></svg>
<svg style="left:792px;top:573px" width="15" height="15" viewBox="0 0 15 15"><path d="M4 7 L4 4.5 A3.5 3.5 0 0 1 11 4.5 L11 7" fill="none" stroke="#222" stroke-width="1.6"/><rect x="1" y="6.5" width="13" height="8" rx="2.5" fill="#9a9a9a" stroke="#222" stroke-width="1.2"/><path d="M2 9 L13 9 M2 12 L13 12" stroke="#444" stroke-width=".8"/><circle cx="7.5" cy="10" r="1.4" fill="#111"/><rect x="6.9" y="10" width="1.2" height="3" fill="#111"/></svg>
<svg style="left:820px;top:576px" width="10" height="10" viewBox="0 0 10 10"><path d="M5 0.5 L5 9.5 M0.5 5 L9.5 5" stroke="#c3cce4" stroke-width="2.2"/></svg>
<svg style="left:847px;top:579px" width="10" height="3" viewBox="0 0 10 3"><path d="M0.5 1.5 L9.5 1.5" stroke="#cfd2dc" stroke-width="2.4"/></svg>
<svg style="left:870px;top:573px" width="16" height="14" viewBox="0 0 16 14"><path d="M1 8 L5.5 13 L15 1.5" fill="none" stroke="#cfe2cf" stroke-width="2.6"/></svg>
<svg style="left:903px;top:573px" width="14" height="15" viewBox="0 0 14 15"><path d="M0.5 1 L13.5 1 L7 6.5 Z M1.5 6 L12.5 6 L7 11.5 Z" fill="#cfe8cf" stroke="#9fd09f" stroke-width="1"/></svg>
<svg style="left:930px;top:573px" width="14" height="15" viewBox="0 0 14 15"><path d="M0.5 1 L13.5 1 L7 6.5 Z M1.5 6 L12.5 6 L7 11.5 Z" fill="#cfe8cf" stroke="#9fd09f" stroke-width="1"/><path d="M1.5 13.5 L12.5 13.5" stroke="#b9dcb9" stroke-width="1.4"/></svg>
<svg style="left:957px;top:572px" width="16" height="15" viewBox="0 0 16 15"><g transform="scale(1.0)"><path d="M2.5 0.5 H5.5 V3 L6.5 4 V13.5 H0.5 V7 L2.5 3.5 Z" fill="#000"/><path d="M12.5 0.5 H9.5 V3 L8.5 4 V13.5 H14.5 V7 L12.5 3.5 Z" fill="#000"/><rect x="6" y="4.5" width="3" height="4" fill="#000"/><path d="M2 8.5 L2.9 5.5 M13 8.5 L12.1 5.5" stroke="#fff" stroke-width=".8"/></g></svg>
<svg style="left:980px;top:572px" width="21" height="15" viewBox="0 0 21 15"><path d="M1 11 L13 2 L20 5 L8 14 Z" fill="#f3e4e6"/><path d="M1 11 L6 8 L10 12 L8 14 Z" fill="#eec8cc"/></svg>
<svg style="left:1014px;top:573px" width="17" height="16" viewBox="0 0 17 16"><path d="M0.5 6 L7 1 L15 5.5 L8.5 11 Z" fill="#f6f08a" stroke="#222" stroke-width="1"/><path d="M0.5 8 L8.5 13 L15 7.5 M0.5 10 L8.5 15 L12 12" fill="none" stroke="#222" stroke-width="1"/><path d="M9 7 L14 7 L16.5 9.5 L16.5 15.5 L9 15.5 Z" fill="#fff" stroke="#222" stroke-width="1"/><path d="M10.5 10.5 L15 10.5 M10.5 12.5 L15 12.5" stroke="#444" stroke-width="1"/></svg>
<svg style="left:1042px;top:576px" width="14" height="9" viewBox="0 0 14 9"><path d="M1 1 L13 1 L7 7.5 Z" fill="#f6f6f6" stroke="#d0d4d8" stroke-width="1.2"/></svg>
<svg style="left:1068px;top:576px" width="14" height="9" viewBox="0 0 14 9"><path d="M1 7.5 L13 7.5 L7 1 Z" fill="#f6f6f6" stroke="#d0d4d8" stroke-width="1.2"/></svg>
<svg style="left:1097px;top:572px" width="20" height="16" viewBox="0 0 20 16"><path d="M5 8 L9 4.5 L14 1.5 M9 4.5 L14 6 M5 8 L9 11 L14 10 M9 11 L13 14" fill="none" stroke="#1c2a9a" stroke-width="1"/><rect x="0.5" y="6.5" width="5" height="3" fill="#fff" stroke="#1c2a9a" stroke-width="1"/><rect x="14" y="0.5" width="5" height="3" fill="#fff" stroke="#1c2a9a" stroke-width="1"/><rect x="14" y="4.8" width="5" height="3" fill="#fff" stroke="#1c2a9a" stroke-width="1"/><rect x="14" y="8.8" width="5" height="3" fill="#fff" stroke="#1c2a9a" stroke-width="1"/><rect x="7" y="3" width="5" height="3" fill="#fff" stroke="#1c2a9a" stroke-width="1"/><rect x="7" y="9.5" width="5" height="3" fill="#fff" stroke="#1c2a9a" stroke-width="1"/><rect x="9.5" y="12.5" width="5" height="3" fill="#fff" stroke="#1c2a9a" stroke-width="1"/></svg>
<svg style="left:1135px;top:573px" width="15" height="15" viewBox="0 0 15 15"><rect x="0.8" y="0.8" width="13.4" height="13.4" fill="#d2d84a" stroke="#2c3408" stroke-width="1.3"/><rect x="3" y="1.5" width="9" height="6" fill="#d9d9cc" stroke="#4a4a3a" stroke-width=".6"/><rect x="3.5" y="9.5" width="8" height="5" fill="#0a0a0a"/><rect x="9" y="10.5" width="1.6" height="3" fill="#ddd"/></svg>
<svg style="left:1173px;top:571px" width="17" height="17" viewBox="0 0 17 17"><g transform="translate(0 7)"><path d="M0.6 3 L0.6 8 A7.4 3 0 0 0 15.4 8 L15.4 3" fill="#0c5a5a" stroke="#062c2c" stroke-width="1"/><ellipse cx="8" cy="6.2" rx="7.4" ry="2.8" fill="#0f7c7c" stroke="#062c2c" stroke-width="1"/><ellipse cx="8" cy="3" rx="7.4" ry="2.8" fill="#22d6d6" stroke="#062c2c" stroke-width="1"/></g><rect x="6" y="0.8" width="10" height="4" fill="#e8e8e8" stroke="#222" stroke-width="1"/><path d="M8 2.8 L14 2.8" stroke="#c04040" stroke-width="1"/><path d="M1 5 Q1 2 4 2" fill="none" stroke="#111" stroke-width="1"/><path d="M3 0.5 L5 2 L3 3.5 Z" fill="#111"/></svg>
<svg style="left:1201px;top:572px" width="16" height="16" viewBox="0 0 16 16"><path d="M1.5 2 L1.5 14.5 L15 14.5" fill="none" stroke="#222" stroke-width="1.3"/><rect x="2.5" y="5" width="3.5" height="9" fill="#2233bb" stroke="#111" stroke-width=".6"/><rect x="6.5" y="2" width="3.5" height="12" fill="#e8d020" stroke="#111" stroke-width=".6"/><rect x="10.5" y="4" width="3.5" height="10" fill="#e02020" stroke="#111" stroke-width=".6"/></svg>
<svg style="left:1225px;top:579px" width="6" height="3" viewBox="0 0 6 3"><path d="M0 0 L5.4 0 L2.7 3 Z" fill="#000"/></svg>
<div style="left:738px;top:596px;width:800px;height:290px;background:#fff"></div>
<div style="left:738px;top:596px;width:800px;height:15px;background:#f4f4f4;border-bottom:1px solid #a8a8a8"></div>
<div style="left:738px;top:596px;width:15px;height:15px;background:linear-gradient(180deg,#fbfbfb,#ececec);border-right:1px solid #a8a8a8;border-bottom:1px solid #a8a8a8;border-left:1px solid #fff"></div>
<div style="left:753px;top:596px;width:26px;height:15px;background:linear-gradient(180deg,#fbfbfb,#ececec);border-right:1px solid #a8a8a8;border-bottom:1px solid #a8a8a8;border-left:1px solid #fff"></div>
<div style="left:779px;top:596px;width:60px;height:15px;background:linear-gradient(180deg,#fbfbfb,#ececec);border-right:1px solid #a8a8a8;border-bottom:1px solid #a8a8a8;border-left:1px solid #fff;overflow:hidden"><div class="u" style="left:3px;top:1px">CZRQ<i class="d">00</i></div></div>
<div style="left:839px;top:596px;width:60px;height:15px;background:linear-gradient(180deg,#fbfbfb,#ececec);border-right:1px solid #a8a8a8;border-bottom:1px solid #a8a8a8;border-left:1px solid #fff;overflow:hidden"><div class="u" style="left:3px;top:1px">CZSJ<i class="d">00</i></div></div>
<div style="left:899px;top:596px;width:60px;height:15px;background:linear-gradient(180deg,#fbfbfb,#ececec);border-right:1px solid #a8a8a8;border-bottom:1px solid #a8a8a8;border-left:1px solid #fff;overflow:hidden"><div class="u" style="left:3px;top:1px">ZXRQ<i class="d">00</i></div></div>
<div style="left:959px;top:596px;width:60px;height:15px;background:linear-gradient(180deg,#fbfbfb,#ececec);border-right:1px solid #a8a8a8;border-bottom:1px solid #a8a8a8;border-left:1px solid #fff;overflow:hidden"><div class="u" style="left:3px;top:1px">ZXSJ<i class="d">00</i></div></div>
<div style="left:1019px;top:596px;width:60px;height:15px;background:linear-gradient(180deg,#fbfbfb,#ececec);border-right:1px solid #a8a8a8;border-bottom:1px solid #a8a8a8;border-left:1px solid #fff;overflow:hidden"><div class="u" style="left:3px;top:1px">CXBZ<i class="d">00</i></div></div>
<div style="left:1079px;top:596px;width:60px;height:15px;background:linear-gradient(180deg,#fbfbfb,#ececec);border-right:1px solid #a8a8a8;border-bottom:1px solid #a8a8a8;border-left:1px solid #fff;overflow:hidden"><div class="u" style="left:3px;top:1px">SFYDJ<i class="d">0</i></div></div>
<div style="left:1139px;top:596px;width:60px;height:15px;background:linear-gradient(180deg,#fbfbfb,#ececec);border-right:1px solid #a8a8a8;border-bottom:1px solid #a8a8a8;border-left:1px solid #fff;overflow:hidden"><div class="u" style="left:3px;top:1px">KDKS<i class="d">00</i></div></div>
<div style="left:1199px;top:596px;width:60px;height:15px;background:linear-gradient(180deg,#fbfbfb,#ececec);border-right:1px solid #a8a8a8;border-bottom:1px solid #a8a8a8;border-left:1px solid #fff;overflow:hidden"><div class="u" style="left:3px;top:1px">YSKS<i class="d">00</i></div></div>
<div style="left:1259px;top:596px;width:60px;height:15px;background:linear-gradient(180deg,#fbfbfb,#ececec);border-right:1px solid #a8a8a8;border-bottom:1px solid #a8a8a8;border-left:1px solid #fff;overflow:hidden"><div class="u" style="left:3px;top:1px">KDYS<i class="d">00</i></div></div>
<div style="left:1319px;top:596px;width:60px;height:15px;background:linear-gradient(180deg,#fbfbfb,#ececec);border-right:1px solid #a8a8a8;border-bottom:1px solid #a8a8a8;border-left:1px solid #fff;overflow:hidden"><div class="u" style="left:3px;top:1px">KDBQ<i class="d">00</i></div></div>
<div style="left:1379px;top:596px;width:60px;height:15px;background:linear-gradient(180deg,#fbfbfb,#ececec);border-right:1px solid #a8a8a8;border-bottom:1px solid #a8a8a8;border-left:1px solid #fff;overflow:hidden"><div class="u" style="left:3px;top:1px">ZXKS<i class="d">00</i></div></div>
<div style="left:1439px;top:596px;width:60px;height:15px;background:linear-gradient(180deg,#fbfbfb,#ececec);border-right:1px solid #a8a8a8;border-bottom:1px solid #a8a8a8;border-left:1px solid #fff;overflow:hidden"><div class="u" style="left:3px;top:1px">ZXYS<i class="d">00</i></div></div>
<div style="left:1499px;top:596px;width:39px;height:15px;background:linear-gradient(180deg,#fbfbfb,#ececec);border-right:1px solid #a8a8a8;border-bottom:1px solid #a8a8a8;border-left:1px solid #fff;overflow:hidden"><div class="u" style="left:3px;top:1px">SFLSCL</div></div>
<div style="left:738px;top:611px;width:800px;height:14px;background:#fff;border-bottom:1px solid #d0d0d0"></div>
<div style="left:899px;top:611px;width:120px;height:13px;background:#fffde4"></div>
<div style="left:738px;top:611px;width:15px;height:14px;background:#f0f0f0;border-right:1px solid #a8a8a8;border-bottom:1px solid #a8a8a8"></div>
<div style="left:753px;top:611px;width:26px;height:14px;background:#f0f0f0;border-right:1px solid #555;border-bottom:1px solid #a8a8a8"><div class="u" style="right:3px;top:0.4px"><i class="d">1</i></div></div>
<div style="left:779px;top:611px;width:60px;height:14px;border-right:1px solid #d0d0d0"></div>
<div class="u" style="left:782px;top:611.4px"><i class="d">20210418</i></div>
<div style="left:839px;top:611px;width:60px;height:14px;border-right:1px solid #d0d0d0"></div>
<div class="u" style="left:842px;top:611.4px"><i class="d">09</i>:<i class="d">07</i>:<i class="d">05</i></div>
<div style="left:899px;top:611px;width:60px;height:14px;border-right:1px solid #d0d0d0"></div>
<div style="left:959px;top:611px;width:60px;height:14px;border-right:1px solid #d0d0d0"></div>
<div style="left:1019px;top:611px;width:60px;height:14px;border-right:1px solid #d0d0d0"></div>
<div class="u" style="left:1022px;top:611.4px">+</div>
<div style="left:1079px;top:611px;width:60px;height:14px;border-right:1px solid #d0d0d0"></div>
<div class="u" style="left:1082px;top:611.4px"><i class="d">0</i></div>
<div style="left:1139px;top:611px;width:60px;height:14px;border-right:1px solid #d0d0d0"></div>
<div class="u" style="left:1139px;top:611.4px;width:56px;text-align:right"><i class="d">233</i></div>
<div style="left:1199px;top:611px;width:60px;height:14px;border-right:1px solid #d0d0d0"></div>
<div class="u" style="left:1199px;top:611.4px;width:56px;text-align:right"><i class="d">233</i></div>
<div style="left:1259px;top:611px;width:60px;height:14px;border-right:1px solid #d0d0d0"></div>
<div class="u" style="left:1259px;top:611.4px;width:56px;text-align:right"><i class="d">1097</i></div>
<div style="left:1319px;top:611px;width:60px;height:14px;border-right:1px solid #d0d0d0"></div>
<div class="u" style="left:1319px;top:611.4px;width:56px;text-align:right"><i class="d">0</i></div>
<div style="left:1379px;top:611px;width:60px;height:14px;border-right:1px solid #d0d0d0"></div>
<div class="u" style="left:1379px;top:611.4px;width:56px;text-align:right"><i class="d">190</i></div>
<div style="left:1439px;top:611px;width:60px;height:14px;border-right:1px solid #d0d0d0"></div>
<div class="u" style="left:1439px;top:611.4px;width:56px;text-align:right"><i class="d">0</i></div>
<div style="left:1499px;top:611px;width:39px;height:14px;border-right:1px solid #d0d0d0"></div>
<div style="left:738px;top:625px;width:800px;height:14px;background:#e9fbe6;border-bottom:1px solid #d0d0d0"></div>
<div style="left:899px;top:625px;width:120px;height:13px;background:#f3fadf"></div>
<div style="left:738px;top:625px;width:15px;height:14px;background:#f0f0f0;border-right:1px solid #a8a8a8;border-bottom:1px solid #a8a8a8"></div>
<div style="left:753px;top:625px;width:26px;height:14px;background:#f0f0f0;border-right:1px solid #555;border-bottom:1px solid #a8a8a8"><div class="u" style="right:3px;top:0.4px"><i class="d">2</i></div></div>
<div style="left:779px;top:625px;width:60px;height:14px;border-right:1px solid #d0d0d0"></div>
<div class="u" style="left:782px;top:625.4px"><i class="d">20210418</i></div>
<div style="left:839px;top:625px;width:60px;height:14px;border-right:1px solid #d0d0d0"></div>
<div class="u" style="left:842px;top:625.4px"><i class="d">09</i>:<i class="d">07</i>:<i class="d">05</i></div>
<div style="left:899px;top:625px;width:60px;height:14px;border-right:1px solid #d0d0d0"></div>
<div style="left:959px;top:625px;width:60px;height:14px;border-right:1px solid #d0d0d0"></div>
<div style="left:1019px;top:625px;width:60px;height:14px;border-right:1px solid #d0d0d0"></div>
<div class="u" style="left:1022px;top:625.4px">+</div>
<div style="left:1079px;top:625px;width:60px;height:14px;border-right:1px solid #d0d0d0"></div>
<div class="u" style="left:1082px;top:625.4px"><i class="d">0</i></div>
<div style="left:1139px;top:625px;width:60px;height:14px;border-right:1px solid #d0d0d0"></div>
<div class="u" style="left:1139px;top:625.4px;width:56px;text-align:right"><i class="d">233</i></div>
<div style="left:1199px;top:625px;width:60px;height:14px;border-right:1px solid #d0d0d0"></div>
<div class="u" style="left:1199px;top:625.4px;width:56px;text-align:right"><i class="d">233</i></div>
<div style="left:1259px;top:625px;width:60px;height:14px;border-right:1px solid #d0d0d0"></div>
<div class="u" style="left:1259px;top:625.4px;width:56px;text-align:right"><i class="d">1097</i></div>
<div style="left:1319px;top:625px;width:60px;height:14px;border-right:1px solid #d0d0d0"></div>
<div class="u" style="left:1319px;top:625.4px;width:56px;text-align:right"><i class="d">0</i></div>
<div style="left:1379px;top:625px;width:60px;height:14px;border-right:1px solid #d0d0d0"></div>
<div class="u" style="left:1379px;top:625.4px;width:56px;text-align:right"><i class="d">190</i></div>
<div style="left:1439px;top:625px;width:60px;height:14px;border-right:1px solid #d0d0d0"></div>
<div class="u" style="left:1439px;top:625.4px;width:56px;text-align:right"><i class="d">0</i></div>
<div style="left:1499px;top:625px;width:39px;height:14px;border-right:1px solid #d0d0d0"></div>
<div style="left:738px;top:639px;width:800px;height:14px;background:#fff;border-bottom:1px solid #d0d0d0"></div>
<div style="left:899px;top:639px;width:120px;height:13px;background:#fffde4"></div>
<div style="left:738px;top:639px;width:15px;height:14px;background:#f0f0f0;border-right:1px solid #a8a8a8;border-bottom:1px solid #a8a8a8"></div>
<div style="left:753px;top:639px;width:26px;height:14px;background:#f0f0f0;border-right:1px solid #555;border-bottom:1px solid #a8a8a8"><div class="u" style="right:3px;top:0.4px"><i class="d">3</i></div></div>
<div style="left:779px;top:639px;width:60px;height:14px;border-right:1px solid #d0d0d0"></div>
<div class="u" style="left:782px;top:639.4px"><i class="d">20210418</i></div>
<div style="left:839px;top:639px;width:60px;height:14px;border-right:1px solid #d0d0d0"></div>
<div class="u" style="left:842px;top:639.4px"><i class="d">09</i>:<i class="d">07</i>:<i class="d">05</i></div>
<div style="left:899px;top:639px;width:60px;height:14px;border-right:1px solid #d0d0d0"></div>
<div style="left:959px;top:639px;width:60px;height:14px;border-right:1px solid #d0d0d0"></div>
<div style="left:1019px;top:639px;width:60px;height:14px;border-right:1px solid #d0d0d0"></div>
<div class="u" style="left:1022px;top:639.4px">+</div>
<div style="left:1079px;top:639px;width:60px;height:14px;border-right:1px solid #d0d0d0"></div>
<div class="u" style="left:1082px;top:639.4px"><i class="d">0</i></div>
<div style="left:1139px;top:639px;width:60px;height:14px;border-right:1px solid #d0d0d0"></div>
<div class="u" style="left:1139px;top:639.4px;width:56px;text-align:right"><i class="d">233</i></div>
<div style="left:1199px;top:639px;width:60px;height:14px;border-right:1px solid #d0d0d0"></div>
<div class="u" style="left:1199px;top:639.4px;width:56px;text-align:right"><i class="d">233</i></div>
<div style="left:1259px;top:639px;width:60px;height:14px;border-right:1px solid #d0d0d0"></div>
<div class="u" style="left:1259px;top:639.4px;width:56px;text-align:right"><i class="d">1097</i></div>
<div style="left:1319px;top:639px;width:60px;height:14px;border-right:1px solid #d0d0d0"></div>
<div class="u" style="left:1319px;top:639.4px;width:56px;text-align:right"><i class="d">0</i></div>
<div style="left:1379px;top:639px;width:60px;height:14px;border-right:1px solid #d0d0d0"></div>
<div class="u" style="left:1379px;top:639.4px;width:56px;text-align:right"><i class="d">190</i></div>
<div style="left:1439px;top:639px;width:60px;height:14px;border-right:1px solid #d0d0d0"></div>
<div class="u" style="left:1439px;top:639.4px;width:56px;text-align:right"><i class="d">0</i></div>
<div style="left:1499px;top:639px;width:39px;height:14px;border-right:1px solid #d0d0d0"></div>
<div style="left:738px;top:653px;width:800px;height:14px;background:#e9fbe6;border-bottom:1px solid #d0d0d0"></div>
<div style="left:899px;top:653px;width:120px;height:13px;background:#f3fadf"></div>
<div style="left:738px;top:653px;width:15px;height:14px;background:#f0f0f0;border-right:1px solid #a8a8a8;border-bottom:1px solid #a8a8a8"></div>
<div style="left:753px;top:653px;width:26px;height:14px;background:#f0f0f0;border-right:1px solid #555;border-bottom:1px solid #a8a8a8"><div class="u" style="right:3px;top:0.4px"><i class="d">4</i></div></div>
<div style="left:779px;top:653px;width:60px;height:14px;border-right:1px solid #d0d0d0"></div>
<div class="u" style="left:782px;top:653.4px"><i class="d">20210418</i></div>
<div style="left:839px;top:653px;width:60px;height:14px;border-right:1px solid #d0d0d0"></div>
<div class="u" style="left:842px;top:653.4px"><i class="d">09</i>:<i class="d">07</i>:<i class="d">05</i></div>
<div style="left:899px;top:653px;width:60px;height:14px;border-right:1px solid #d0d0d0"></div>
<div style="left:959px;top:653px;width:60px;height:14px;border-right:1px solid #d0d0d0"></div>
<div style="left:1019px;top:653px;width:60px;height:14px;border-right:1px solid #d0d0d0"></div>
<div class="u" style="left:1022px;top:653.4px">+</div>
<div style="left:1079px;top:653px;width:60px;height:14px;border-right:1px solid #d0d0d0"></div>
<div class="u" style="left:1082px;top:653.4px"><i class="d">0</i></div>
<div style="left:1139px;top:653px;width:60px;height:14px;border-right:1px solid #d0d0d0"></div>
<div class="u" style="left:1139px;top:653.4px;width:56px;text-align:right"><i class="d">233</i></div>
<div style="left:1199px;top:653px;width:60px;height:14px;border-right:1px solid #d0d0d0"></div>
<div class="u" style="left:1199px;top:653.4px;width:56px;text-align:right"><i class="d">233</i></div>
<div style="left:1259px;top:653px;width:60px;height:14px;border-right:1px solid #d0d0d0"></div>
<div class="u" style="left:1259px;top:653.4px;width:56px;text-align:right"><i class="d">1097</i></div>
<div style="left:1319px;top:653px;width:60px;height:14px;border-right:1px solid #d0d0d0"></div>
<div class="u" style="left:1319px;top:653.4px;width:56px;text-align:right"><i class="d">0</i></div>
<div style="left:1379px;top:653px;width:60px;height:14px;border-right:1px solid #d0d0d0"></div>
<div class="u" style="left:1379px;top:653.4px;width:56px;text-align:right"><i class="d">190</i></div>
<div style="left:1439px;top:653px;width:60px;height:14px;border-right:1px solid #d0d0d0"></div>
<div style="left:1488px;top:654px;width:6px;height:12px;background:#3a79d8"></div>
<div class="u" style="left:1488px;top:653.4px;color:#fff"><i class="d">0</i></div>
<div style="left:1499px;top:653px;width:39px;height:14px;border-right:1px solid #d0d0d0"></div>
<svg style="left:742px;top:655px" width="7" height="10" viewBox="0 0 7 10"><path d="M0 0 L7 5 L0 10 Z" fill="#000"/></svg>
<div style="left:1021px;top:587px;width:39px;height:94px;border:3px solid #f0281c;border-radius:4px"></div>
<div style="left:1433px;top:586px;width:74px;height:110px;border:3px solid #f0281c;border-radius:4px"></div>
<div style="left:738px;top:886px;width:800px;height:16px;background:#efefef;border-top:1px solid #e4e4e4"></div>
<div style="left:912px;top:886px;width:114px;height:16px;background:linear-gradient(180deg,#f3f3f3,#e3e3e3 50%,#d2d2d2 52%,#dcdcdc);border:1px solid #9a9a9a;border-radius:2px"></div>
<div style="left:966px;top:891px;width:1px;height:6px;background:#555"></div>
<div style="left:969px;top:891px;width:1px;height:6px;background:#555"></div>
<div style="left:972px;top:891px;width:1px;height:6px;background:#555"></div>
<svg style="left:744px;top:891px" width="4" height="7" viewBox="0 0 4 7"><path d="M4 0 L0 3.5 L4 7 Z" fill="#444"/></svg>
<svg style="left:1527px;top:891px" width="4" height="7" viewBox="0 0 4 7"><path d="M0 0 L4 3.5 L0 7 Z" fill="#444"/></svg>
<div style="left:730px;top:913px;width:816px;height:1px;background:#c8c8c8"></div>
<div style="left:730px;top:914px;width:816px;height:22px;background:#f0f0f0"></div>
<div style="left:732px;top:916px;width:19px;height:7px;background:#0000e0"></div>
<div style="left:732px;top:926px;width:19px;height:7px;background:#000"></div>
<svg style="left:756px;top:918px" width="13" height="13" viewBox="0 0 13 13"><path d="M9.5 3.5 A4.3 4.3 0 1 0 10.8 7.5" stroke="#000" stroke-width="2" fill="none"/><path d="M7 0 L12 0 L12 5 Z" fill="#d01818"/></svg>
<div style="left:773px;top:916px;width:2px;height:18px;border-left:1px solid #d8d8d8;border-right:1px solid #fff"></div>
<div style="left:848px;top:916px;width:2px;height:18px;border-left:1px solid #d8d8d8;border-right:1px solid #fff"></div>
<div style="left:919px;top:916px;width:2px;height:18px;border-left:1px solid #d8d8d8;border-right:1px solid #fff"></div>
<div style="left:781px;top:916px;font:bold 13px/16px 'Liberation Sans',sans-serif">&amp;</div>
<div class="u" style="left:802px;top:919px;"><i class="d">2</i>:<i class="d">1</i></div>
<svg style="left:927px;top:921px" width="8" height="5" viewBox="0 0 8 5"><path d="M0 0 L8 0 L4 5 Z" fill="#000"/></svg>
<div class="u" style="left:942px;top:919px;">sd_hospital@ORCL</div>
<svg style="left:1108px;top:918px" width="16" height="11" viewBox="0 0 16 11"><path d="M0 5.5 L6 5.5 M6 2 L6 9 M6 3 L13 3 L15 1 L15 10 L13 8 L6 8" stroke="#000" stroke-width="1.6" fill="none"/><rect x="7" y="3" width="6" height="5" fill="#000"/></svg>
<div class="u" style="left:1130px;top:919px;">zxys<i class="d">00</i>, number(<i class="d">5</i>), mandatory, default = <i class="d">0</i></div>
<div style="left:899.5px;top:20px;width:69.5px;height:30.6px;background:#fff"></div>
<div style="left:912px;top:36px;width:13px;height:2px;background:#5b8ff5"></div>
<svg style="left:945px;top:31px" width="16" height="10" viewBox="0 0 16 10"><path d="M1.5 1.5 L8 8 L14.5 1.5" stroke="#7b5cf0" stroke-width="2.2" fill="none"/></svg>
</body></html>
